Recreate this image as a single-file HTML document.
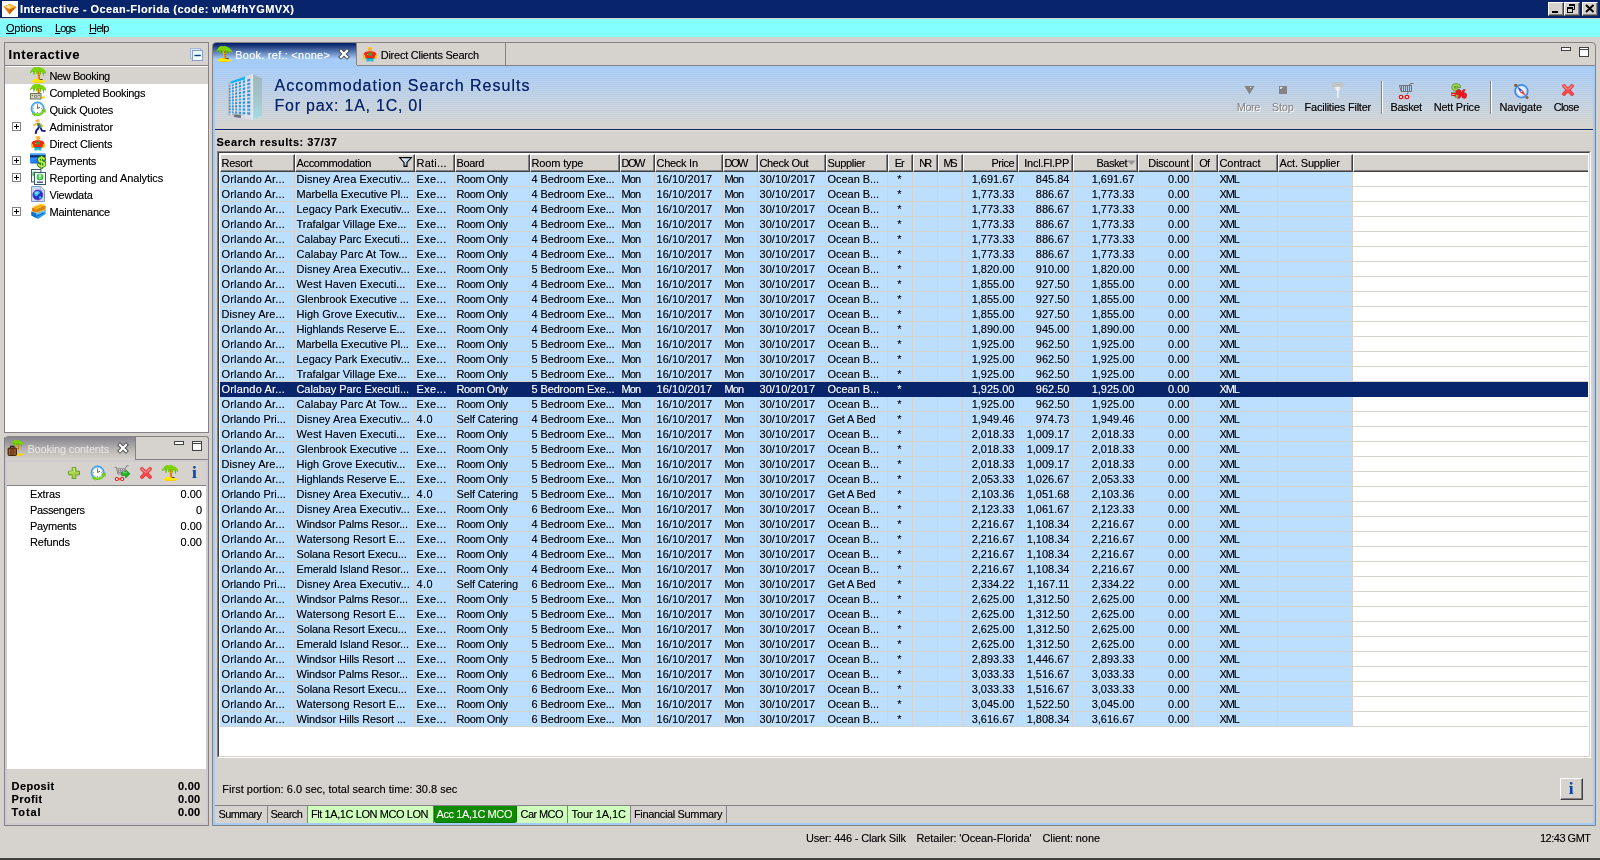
<!DOCTYPE html><html><head><meta charset="utf-8"><title>Interactive</title><style>
html,body{margin:0;padding:0;}
body{will-change:transform;width:1600px;height:860px;position:relative;overflow:hidden;background:#d6d3ce;font-family:"Liberation Sans", sans-serif;font-size:11px;color:#000000;text-shadow:0 0 0 rgba(0,0,0,.4);}
.wt{color:#ffffff;text-shadow:0 0 0 rgba(255,255,255,.4);}
div,svg{position:absolute;box-sizing:border-box;}
svg{overflow:visible;}
.t{white-space:nowrap;line-height:13px;height:13px;}
u{text-decoration:underline;}
.row{left:0;width:1368px;height:15px;border-bottom:1px solid #d6d3ce;}
.c{top:0;height:14px;line-height:14px;white-space:nowrap;overflow:hidden;background:#bddfff;border-right:1px solid #d6d3ce;padding:0 2.5px 0 1.5px;}
.sel .c{background:#08246b;color:#ffffff;text-shadow:0 0 0 rgba(255,255,255,.4);border-right-color:#08246b;}
.sel{background:#08246b;border-bottom-color:#08246b;}
.h{top:1px;height:18px;line-height:14px;white-space:nowrap;overflow:hidden;padding:1px 3px 0 0.5px;border-left:1px solid #ffffff;border-top:1px solid #ffffff;border-right:1px solid #424142;border-bottom:1px solid #424142;box-shadow:inset -1px -1px 0 #848284;background:#d6d3ce;}
</style></head><body><div style="left:0px;top:0px;width:1600px;height:18px;background:#08246b"></div>
<div style="left:0px;top:18px;width:1600px;height:1px;background:#d6d3ce"></div>
<div style="left:2px;top:1px;width:16px;height:16px;background:#ffffff"></div>
<svg style="left:2px;top:1px" width="16" height="16" viewBox="0 0 16 16"><path d="M1.5 5.5L8 3L14.5 6L7.5 13.5Z" fill="#de7908"/><path d="M2 5.5L8 3.3L13.5 6L7.5 8.5Z" fill="#ffc342"/><path d="M3 5.5L7 4.2L9 6.2L6 7.3Z" fill="#ffe39c"/><path d="M7.5 8.5L13.5 6L7.5 13Z" fill="#c65d00"/></svg>
<div class="t" style="left:20px;top:3px;color:#ffffff;text-shadow:0 0 0 rgba(255,255,255,.4);letter-spacing:0.411px;font-weight:bold">Interactive - Ocean-Florida (code: wM4fhYGMVX)</div>
<div style="left:1548px;top:2px;width:16px;height:14px;background:#d6d3ce;border-left:1px solid #ffffff;border-top:1px solid #ffffff;border-right:1px solid #424142;border-bottom:1px solid #424142;box-shadow:inset -1px -1px 0 #848284;"></div>
<svg style="left:1548px;top:2px" width="16" height="14" viewBox="0 0 16 14"><rect x="4" y="9" width="6" height="2" fill="#000000"/></svg>
<div style="left:1564px;top:2px;width:16px;height:14px;background:#d6d3ce;border-left:1px solid #ffffff;border-top:1px solid #ffffff;border-right:1px solid #424142;border-bottom:1px solid #424142;box-shadow:inset -1px -1px 0 #848284;"></div>
<svg style="left:1564px;top:2px" width="16" height="14" viewBox="0 0 16 14"><path d="M5.5 2.5h5v5h-1.500" fill="none" stroke="#000000"/><rect x="5" y="2" width="6" height="2" fill="#000000"/><rect x="3.500" y="5.500" width="5" height="5" fill="none" stroke="#000000"/><rect x="3" y="5" width="6" height="2" fill="#000000"/></svg>
<div style="left:1582px;top:2px;width:16px;height:14px;background:#d6d3ce;border-left:1px solid #ffffff;border-top:1px solid #ffffff;border-right:1px solid #424142;border-bottom:1px solid #424142;box-shadow:inset -1px -1px 0 #848284;"></div>
<svg style="left:1582px;top:2px" width="16" height="14" viewBox="0 0 16 14"><path d="M4 3l7.5 7M11.5 3l-7.5 7" stroke="#000000" stroke-width="1.9"/></svg>
<div style="left:0px;top:19px;width:1600px;height:18px;background:#84ffff"></div>
<div class="t" style="left:6px;top:22px;;letter-spacing:-0.233px"><u>O</u>ptions</div>
<div class="t" style="left:55px;top:22px;;letter-spacing:-0.967px"><u>L</u>ogs</div>
<div class="t" style="left:89px;top:22px;;letter-spacing:-0.767px"><u>H</u>elp</div>
<div style="left:4px;top:42px;width:205px;height:391px;border:1px solid #848284;background:#d6d3ce"></div>
<div class="t" style="left:8.5px;top:47px;font-size:13px;line-height:16px;height:16px;letter-spacing:0.600px;font-weight:bold">Interactive</div>
<div style="left:5px;top:65px;width:203px;height:1px;background:#848284"></div>
<div style="left:5px;top:66px;width:203px;height:366px;background:#ffffff"></div>
<svg style="left:190px;top:48px" width="13" height="13" viewBox="0 0 13 13"><defs><linearGradient id="pm" x1="0" y1="0" x2="0" y2="1"><stop offset="0" stop-color="#def7ff"/><stop offset="1" stop-color="#ffffff"/></linearGradient></defs><rect x="0.5" y="0.5" width="10" height="10" fill="#d6efff" stroke="#a5b6d6"/><rect x="2.5" y="2.5" width="10" height="10" fill="url(#pm)" stroke="#8c9ec6"/><rect x="4.400" y="6.800" width="6.400" height="1.400" fill="#084173"/></svg>
<div style="left:5px;top:67px;width:203px;height:17px;background:#d6d3ce"></div>
<svg style="left:30px;top:67px" width="16" height="16" viewBox="0 0 16 16"><path d="M4 12h6.500l1 1.500H15v1.600h-1.500V16H4v-1H1v-1.500h3z" fill="#ffe700"/><path d="M4 15h9.500v1H4z" fill="#ffcf00"/><rect x="10.200" y="12" width="2.400" height="1" fill="#523000"/><path d="M7.700 3.600L8.300 7.500L8.900 13" stroke="#ffc300" stroke-width="2.300" fill="none"/><path d="M8.300 4.500L9 8L9.500 13" stroke="#e77900" stroke-width="1" fill="none"/><path d="M8 6.200h1.600M8.300 8.600h1.500M8.400 10.800h1.500" stroke="#bd4900" stroke-width=".9"/><path d="M3 1L5 0L7 .6L8 0H9.500L11 1L13 1.600L15 3.500L16.300 5.500L16 6.800L15 6.500L14.200 5L14 8.500L13.200 9L12.800 6.500L12 5L11 5.500V7.500L10 8L9.800 5L8.500 4.500L7.500 5L7.200 7L6.200 7.200V4.500H5L4.500 7.500L3.500 8.200L3.200 5L2 4.500L1 6H0L.2 5L1.500 3Z" fill="#63c300"/><path d="M3.500 1.800L5.200 .8L7 1.400L8.200 .8L9.400 .8L10.800 1.800L12.600 2.400L14.400 4L15.400 5.600M2 3.600L4 2.800L6 3.200L9 3L11.500 3.600L13.400 4.600" stroke="#94e300" stroke-width="1" fill="none"/></svg>
<div class="t" style="left:49.5px;top:70px;;letter-spacing:-0.410px">New Booking</div>
<svg style="left:30px;top:84px" width="16" height="16" viewBox="0 0 16 16"><path d="M10 12.500h5.500l-1.500 2h-4z" fill="#ffcf00"/><path d="M7.700 3.600L8.300 7.500L8.900 13" stroke="#ffc300" stroke-width="2.300" fill="none"/><path d="M8.300 4.500L9 8L9.500 13" stroke="#e77900" stroke-width="1" fill="none"/><path d="M8 6.200h1.600M8.300 8.600h1.500M8.400 10.800h1.500" stroke="#bd4900" stroke-width=".9"/><path d="M3 1L5 0L7 .6L8 0H9.500L11 1L13 1.600L15 3.500L16.300 5.500L16 6.800L15 6.500L14.200 5L14 8.500L13.200 9L12.800 6.500L12 5L11 5.500V7.500L10 8L9.800 5L8.500 4.500L7.500 5L7.200 7L6.200 7.200V4.500H5L4.500 7.500L3.500 8.200L3.200 5L2 4.500L1 6H0L.2 5L1.500 3Z" fill="#63c300"/><path d="M3.500 1.800L5.200 .8L7 1.400L8.200 .8L9.400 .8L10.800 1.800L12.600 2.400L14.400 4L15.400 5.600M2 3.600L4 2.800L6 3.200L9 3L11.500 3.600L13.400 4.600" stroke="#94e300" stroke-width="1" fill="none"/><rect x="0.5" y="9.500" width="10.500" height="5.500" fill="#cecfbd" stroke="#73755a"/><circle cx="5.700" cy="12.300" r="1.700" fill="#8c8e7b"/><circle cx="5.700" cy="12.300" r=".7" fill="#dedfce"/><rect x="1.800" y="11" width="1.400" height="1" fill="#73755a"/><rect x="8.200" y="11" width="1.600" height="1" fill="#73755a"/></svg>
<div class="t" style="left:49.5px;top:87px;;letter-spacing:-0.329px">Completed Bookings</div>
<svg style="left:30px;top:101px" width="16" height="16" viewBox="0 0 16 16"><circle cx="7.6" cy="7.6" r="7" fill="#299eff"/><circle cx="7.6" cy="7.6" r="6" fill="#5abaff"/><circle cx="7.6" cy="7.4" r="5" fill="#ffffff" stroke="#b5bac6" stroke-width=".7"/><path d="M7.6 4.2V7.6L10 6.2" stroke="#525152" stroke-width=".9" fill="none"/><g fill="#737173"><rect x="7.2" y="3" width=".8" height=".8"/><rect x="7.2" y="11" width=".8" height=".8"/><rect x="3.2" y="7" width=".8" height=".8"/><rect x="11.2" y="7" width=".8" height=".8"/></g><path d="M4.2 11.2C6 13.6 10.4 13.4 12.6 10L11 9.2L15.6 7.4L15.8 12L14.4 11C12 15 7 16.4 4.6 13.4L6 16L1.6 13Z" fill="#6bcb18"/><path d="M5 12C7 14 10.6 13.6 12.8 10.6" stroke="#a5f342" stroke-width=".8" fill="none"/></svg>
<div class="t" style="left:49.5px;top:104px;;letter-spacing:-0.255px">Quick Quotes</div>
<svg style="left:30px;top:118px" width="16" height="16" viewBox="0 0 16 16"><path d="M7 0.8l3 1.2-1.2 1z" fill="#f7a200"/><circle cx="8" cy="3" r="1.7" fill="#ffba6b"/><path d="M5.4 2.6l2 .2" stroke="#f7a200" stroke-width="1.2"/><path d="M7 5L10.4 5.6L11.6 9.4L8 10.4Z" fill="#2949ad"/><path d="M8.6 5.2L10.8 9.4" stroke="#39aa39" stroke-width="1.6"/><path d="M10.4 6L13 8.6" stroke="#f7b221" stroke-width="1.6"/><path d="M7 5.6L4.2 7.2L3.2 7" stroke="#f7b221" stroke-width="1.5" fill="none"/><path d="M8.6 10L6.4 12.4L5.6 15.8" stroke="#181884" stroke-width="2" fill="none"/><path d="M10.6 9.8L12 12.6L15.6 13.2" stroke="#181884" stroke-width="1.8" fill="none"/></svg>
<div class="t" style="left:49.5px;top:121px;;letter-spacing:-0.100px">Administrator</div>
<div style="left:12px;top:122px;width:9px;height:9px;border:1px solid #848284;background:#ffffff"></div>
<div style="left:14px;top:126px;width:5px;height:1px;background:#000000"></div>
<div style="left:16px;top:124px;width:1px;height:5px;background:#000000"></div>
<svg style="left:30px;top:135px" width="16" height="16" viewBox="0 0 16 16"><ellipse cx="8" cy="2.2" rx="2.6" ry="1.2" fill="#ffd321"/><circle cx="8" cy="3.4" r="2" fill="#ffb242"/><path d="M1.6 9.4C1.4 6 4 5.2 8 5.2S14.6 6 14.4 9.4L13.4 12.6H2.6Z" fill="#f72810"/><path d="M1.4 8.4c-.8 1.8-.2 4 .8 5l1.4-.8-.8-3.6z M14.6 8.4c.8 1.8.2 4-.8 5l-1.4-.8.8-3.6z" fill="#ffc310"/><rect x="6.4" y="6.6" width="3.6" height="3" fill="#29aa39"/><rect x="5" y="8" width="1.2" height="1" fill="#ffd321"/><path d="M4.2 12.2h7.6l-.4 3.4h-2.8L8 14l-.6 1.6H4.6z" fill="#21bace"/><rect x="5.2" y="12" width="5.6" height="1" fill="#108a9c"/></svg>
<div class="t" style="left:49.5px;top:138px;;letter-spacing:-0.192px">Direct Clients</div>
<svg style="left:30px;top:152px" width="16" height="16" viewBox="0 0 16 16"><rect x="0" y="1" width="15.5" height="10.5" rx="1.2" fill="#318af7"/><rect x="0" y="1" width="15.5" height="1.4" rx=".6" fill="#73baff"/><rect x="0" y="3.2" width="15.5" height="2.2" fill="#083073"/><path d="M0 11.5L9 5.4H15.5V10.3a1.2 1.2 0 0 1-1.2 1.2Z" fill="#1869d6" opacity=".55"/><text x="11.6" y="15.3" font-family="Liberation Sans" font-weight="bold" font-size="14.5" text-anchor="middle" fill="#398e10" stroke="#398e10" stroke-width="1.6">$</text><text x="11.6" y="15.3" font-family="Liberation Sans" font-weight="bold" font-size="14.5" text-anchor="middle" fill="#bdf352">$</text></svg>
<div class="t" style="left:49.5px;top:155px;;letter-spacing:-0.300px">Payments</div>
<div style="left:12px;top:156px;width:9px;height:9px;border:1px solid #848284;background:#ffffff"></div>
<div style="left:14px;top:160px;width:5px;height:1px;background:#000000"></div>
<div style="left:16px;top:158px;width:1px;height:5px;background:#000000"></div>
<svg style="left:30px;top:169px" width="16" height="16" viewBox="0 0 16 16"><rect x="1.5" y="0.5" width="9.4" height="12.4" fill="#eff7f7" stroke="#39596b"/><circle cx="4.4" cy="5" r="2.4" fill="#5acb5a"/><rect x="4.5" y="3.5" width="11" height="12" fill="#f7fbff" stroke="#39596b"/><circle cx="10" cy="8" r="3.3" fill="#21b221"/><circle cx="10" cy="7.6" r="2.6" fill="#52db52"/><rect x="9.4" y="5.4" width="1.2" height="3" fill="#ffffff"/><rect x="9.4" y="9" width="1.2" height="1.1" fill="#ffffff"/><rect x="7" y="12.6" width="6" height="1.2" fill="#213842"/></svg>
<div class="t" style="left:49.5px;top:172px;;letter-spacing:-0.082px">Reporting and Analytics</div>
<div style="left:12px;top:173px;width:9px;height:9px;border:1px solid #848284;background:#ffffff"></div>
<div style="left:14px;top:177px;width:5px;height:1px;background:#000000"></div>
<div style="left:16px;top:175px;width:1px;height:5px;background:#000000"></div>
<svg style="left:30px;top:186px" width="16" height="16" viewBox="0 0 16 16"><path d="M1.5 0.5h9.2l3.8 3.8v11.2h-13z" fill="#cedbf7" stroke="#849ac6"/><path d="M10.7 0.5v3.8h3.8z" fill="#f7fbff" stroke="#849ac6" stroke-width=".7"/><circle cx="7.8" cy="9" r="5" fill="#2930ce"/><circle cx="7.8" cy="9" r="5" fill="none" stroke="#6338c6" stroke-width=".8"/><path d="M4.4 8c.8-3 3.8-3.6 5-2.4s.4 2.2-.8 2.6-1 2.4-2.2 2-2.2-.8-2-2.2z" fill="#29cbde"/><path d="M9.4 10.4c1.2-.6 2.4 0 2 1.2s-1.6 1.6-2.2.8 0-1.800.2-2z" fill="#29cbde"/><ellipse cx="6.2" cy="6.8" rx="1.8" ry="1.2" fill="#b5dbff" opacity=".75"/></svg>
<div class="t" style="left:49.5px;top:189px;;letter-spacing:-0.229px">Viewdata</div>
<svg style="left:30px;top:203px" width="16" height="16" viewBox="0 0 16 16"><path d="M2.4 3.6L11.4 0.4L15.6 2L6.4 5.6Z" fill="#ffd339"/><path d="M2 5.2L11 2L15.6 3.6L6.4 7.2Z" fill="#f7a210"/><path d="M2 6.800L11 3.6L15.6 5.200L6.4 8.800Z" fill="#ffcb31"/><path d="M2 4.400L6.4 6.200V10L2 8.200Z" fill="#de8200"/><path d="M6.400 6.400L15.600 2.800V7L6.400 10.600Z" fill="#ef9a10" opacity=".9"/><path d="M6.4 6.800l9.200-3.600M6.400 8.400l9.200-3.600" stroke="#ad6100" stroke-width=".7"/><path d="M1.400 8.400L6.400 10.600L15.600 7V11L8 16L1.400 12.400Z" fill="#299aef"/><path d="M1.400 8.400L6.400 10.600V15L1.400 12.400Z" fill="#1071c6"/><path d="M6.400 10.600L15.600 7V8.400L6.400 12Z" fill="#6bcbff"/><path d="M6.4 13.4L13.6 10" stroke="#0859a5" stroke-width=".8"/></svg>
<div class="t" style="left:49.5px;top:206px;;letter-spacing:-0.230px">Maintenance</div>
<div style="left:12px;top:207px;width:9px;height:9px;border:1px solid #848284;background:#ffffff"></div>
<div style="left:14px;top:211px;width:5px;height:1px;background:#000000"></div>
<div style="left:16px;top:209px;width:1px;height:5px;background:#000000"></div>
<div style="left:4px;top:437px;width:205px;height:389px;border:1px solid #848284;background:#d6d3ce;border-top:none;border-right:none"></div>
<div style="left:208px;top:441px;width:1px;height:385px;background:#848284"></div>
<div style="left:135px;top:459px;width:74px;height:1px;background:#848284"></div>
<div style="left:130px;top:436px;width:79px;height:7px;border-top:1px solid #848284;border-right:1px solid #848284;border-radius:0 3px 0 0"></div>
<div style="left:5px;top:460px;width:203px;height:365px;border:2px solid #cecbce"></div>
<div style="left:4px;top:436px;width:132px;height:24px;background:linear-gradient(#848284 0%,#8c8a94 12%,#bdbab5 62%,#d6d3ce 100%);border-radius:5px 0 0 0;border-right:1px solid #848284;border-left:1px solid #848284"></div>
<svg style="left:7px;top:440px" width="16" height="16" viewBox="0 0 16 16"><g transform="translate(4,0) scale(.78)"><path d="M7.700 3.600L8.300 7.500L8.900 13" stroke="#ffc300" stroke-width="2.300" fill="none"/><path d="M8.300 4.500L9 8L9.500 13" stroke="#e77900" stroke-width="1" fill="none"/><path d="M8 6.200h1.600M8.300 8.600h1.500M8.400 10.800h1.500" stroke="#bd4900" stroke-width=".9"/><path d="M3 1L5 0L7 .6L8 0H9.500L11 1L13 1.600L15 3.500L16.300 5.500L16 6.800L15 6.500L14.200 5L14 8.500L13.200 9L12.800 6.500L12 5L11 5.500V7.500L10 8L9.800 5L8.500 4.500L7.500 5L7.200 7L6.200 7.200V4.500H5L4.500 7.500L3.500 8.200L3.200 5L2 4.500L1 6H0L.2 5L1.500 3Z" fill="#63c300"/><path d="M3.500 1.800L5.200 .8L7 1.400L8.200 .8L9.400 .8L10.800 1.800L12.600 2.400L14.400 4L15.400 5.600M2 3.600L4 2.800L6 3.200L9 3L11.500 3.600L13.400 4.600" stroke="#94e300" stroke-width="1" fill="none"/></g><path d="M9 13.500h7.500v1.200l-2 1h-5.500z" fill="#ffd300"/><rect x="1" y="8" width="8.500" height="7.500" rx="1" fill="#7b4521" stroke="#391c08" stroke-width=".9"/><path d="M3.600 8v-1.600h3.400V8" fill="none" stroke="#391c08" stroke-width="1.100"/><path d="M2.500 9v6M8 9v6" stroke="#ad6939" stroke-width=".8"/></svg>
<div class="t" style="left:27.4px;top:442.6px;color:#e7e7e7;text-shadow:none;letter-spacing:-0.173px">Booking contents</div>
<svg style="left:117.5px;top:443px" width="10" height="10" viewBox="0 0 10 10"><path d="M2 2l6 6M8 2l-6 6" stroke="#424142" stroke-width="4" stroke-linecap="square"/><path d="M2 2l6 6M8 2l-6 6" stroke="#ffffff" stroke-width="2.300" stroke-linecap="square"/></svg>
<svg style="left:174px;top:441px" width="10" height="4" viewBox="0 0 10 4"><rect x="0.5" y="0.5" width="9" height="3" fill="#ffffff" stroke="#424142"/></svg>
<svg style="left:192px;top:441px" width="10" height="10" viewBox="0 0 10 10"><rect x="0.5" y="0.5" width="9" height="9" fill="#ffffff" stroke="#424142"/><rect x="0" y="2" width="10" height="1" fill="#424142"/></svg>
<div style="left:7px;top:485px;width:199px;height:1px;background:#848284"></div>
<svg style="left:66px;top:465px" width="16" height="16" viewBox="0 0 16 16"><path d="M6.200 2.500h3.600v3.700h3.700v3.600h-3.700v3.700h-3.600v-3.700h-3.700v-3.600h3.700z" fill="#a5d34a" stroke="#6b9e21" stroke-width="1"/><path d="M7 3.400h1.200v3.600M3.400 7h3.600" stroke="#d6f39c" stroke-width=".9" fill="none"/></svg>
<svg style="left:90px;top:465px" width="16" height="16" viewBox="0 0 16 16"><circle cx="7.6" cy="7.6" r="7" fill="#299eff"/><circle cx="7.6" cy="7.6" r="6" fill="#5abaff"/><circle cx="7.6" cy="7.4" r="5" fill="#ffffff" stroke="#b5bac6" stroke-width=".7"/><path d="M7.6 4.2V7.6L10 6.2" stroke="#525152" stroke-width=".9" fill="none"/><g fill="#737173"><rect x="7.2" y="3" width=".8" height=".8"/><rect x="7.2" y="11" width=".8" height=".8"/><rect x="3.2" y="7" width=".8" height=".8"/><rect x="11.2" y="7" width=".8" height=".8"/></g><path d="M4.2 11.2C6 13.6 10.4 13.4 12.6 10L11 9.2L15.6 7.4L15.8 12L14.4 11C12 15 7 16.4 4.6 13.4L6 16L1.6 13Z" fill="#6bcb18"/><path d="M5 12C7 14 10.6 13.6 12.8 10.6" stroke="#a5f342" stroke-width=".8" fill="none"/></svg>
<svg style="left:114px;top:465px" width="16" height="16" viewBox="0 0 16 16"><path d="M0.500 2.500h2l1.400 6.500h6.600" stroke="#848284" fill="none"/><path d="M2.800 3.500h8.700M3.200 5.500h7.800M3.500 7.500h7" stroke="#949294" stroke-width=".9"/><path d="M4.500 3.500v4M6.500 3.500v4M8.500 3.500v4M10.500 3.500v4" stroke="#949294"/><path d="M11.500 3.500L12.500 0.800h2" stroke="#848284" fill="none"/><circle cx="2.800" cy="14" r="1.500" fill="#ffffff" stroke="#ef1010" stroke-width="1.100"/><circle cx="8.200" cy="14" r="1.500" fill="#ffffff" stroke="#ef1010" stroke-width="1.100"/><path d="M4.400 14h2.200" stroke="#ef1010" stroke-width="1.100"/><path d="M7.500 7h4.200v-2.400l4.200 4.200l-4.200 4.200v-2.400h-4.200z" fill="#21b221" stroke="#107910" stroke-width=".6"/><path d="M8.200 7.800h4.200v-1.200" stroke="#84eb84" stroke-width=".8" fill="none"/></svg>
<svg style="left:138px;top:465px" width="16" height="16" viewBox="0 0 16 16"><path d="M4 4l8 8M12 4l-8 8" stroke="#de3031" stroke-width="3.800" stroke-linecap="round"/><path d="M4 4l8 8M12 4l-8 8" stroke="#f7494a" stroke-width="2.600" stroke-linecap="round"/><path d="M4 4l3.200 3.200M12 4l-3.200 3.200" stroke="#ff9294" stroke-width="1.200" stroke-linecap="round"/></svg>
<svg style="left:162px;top:465px" width="16" height="16" viewBox="0 0 16 16"><path d="M4 12h6.500l1 1.500H15v1.600h-1.500V16H4v-1H1v-1.500h3z" fill="#ffe700"/><path d="M4 15h9.500v1H4z" fill="#ffcf00"/><rect x="10.200" y="12" width="2.400" height="1" fill="#523000"/><path d="M7.700 3.600L8.300 7.500L8.900 13" stroke="#ffc300" stroke-width="2.300" fill="none"/><path d="M8.300 4.500L9 8L9.500 13" stroke="#e77900" stroke-width="1" fill="none"/><path d="M8 6.200h1.600M8.300 8.600h1.500M8.400 10.800h1.500" stroke="#bd4900" stroke-width=".9"/><path d="M3 1L5 0L7 .6L8 0H9.500L11 1L13 1.600L15 3.500L16.300 5.500L16 6.800L15 6.500L14.200 5L14 8.500L13.200 9L12.800 6.500L12 5L11 5.500V7.500L10 8L9.800 5L8.500 4.500L7.500 5L7.200 7L6.200 7.200V4.500H5L4.500 7.500L3.500 8.200L3.200 5L2 4.500L1 6H0L.2 5L1.500 3Z" fill="#63c300"/><path d="M3.500 1.800L5.200 .8L7 1.400L8.200 .8L9.400 .8L10.800 1.800L12.600 2.400L14.400 4L15.400 5.600M2 3.600L4 2.800L6 3.200L9 3L11.500 3.600L13.400 4.600" stroke="#94e300" stroke-width="1" fill="none"/></svg>
<div class="t" style="left:192px;top:463.7px;font-family:&quot;Liberation Serif&quot;,serif;font-weight:bold;font-size:17px;color:#0849ad;line-height:18px;height:18px">i</div>
<div style="left:7px;top:486px;width:199px;height:283px;background:#ffffff"></div>
<div class="t" style="left:30px;top:488px;;letter-spacing:-0.140px">Extras</div>
<div class="t" style="left:150px;top:488px;width:52px;text-align:right">0.00</div>
<div class="t" style="left:30px;top:504px;;letter-spacing:-0.344px">Passengers</div>
<div class="t" style="left:150px;top:504px;width:52px;text-align:right">0</div>
<div class="t" style="left:30px;top:520px;;letter-spacing:-0.300px">Payments</div>
<div class="t" style="left:150px;top:520px;width:52px;text-align:right">0.00</div>
<div class="t" style="left:30px;top:536px;;letter-spacing:-0.167px">Refunds</div>
<div class="t" style="left:150px;top:536px;width:52px;text-align:right">0.00</div>
<div class="t" style="left:11.6px;top:780px;;letter-spacing:0.367px;font-weight:bold">Deposit</div>
<div class="t" style="left:150px;top:780px;width:50.5px;text-align:right;letter-spacing:0.3px;font-weight:bold">0.00</div>
<div class="t" style="left:11.6px;top:793px;;letter-spacing:0.360px;font-weight:bold">Profit</div>
<div class="t" style="left:150px;top:793px;width:50.5px;text-align:right;letter-spacing:0.3px;font-weight:bold">0.00</div>
<div class="t" style="left:11.6px;top:806px;;letter-spacing:0.875px;font-weight:bold">Total</div>
<div class="t" style="left:150px;top:806px;width:50.5px;text-align:right;letter-spacing:0.3px;font-weight:bold">0.00</div>
<div style="left:212px;top:42px;width:1384px;height:784px;border:1px solid #848284;border-radius:4px 4px 0 0;background:#d6d3ce"></div>
<div style="left:213px;top:65px;width:1382px;height:760px;border:2px solid #a5cbf7;border-top:none"></div>
<div style="left:357px;top:65px;width:1238px;height:1px;background:#848284"></div>
<div style="left:213px;top:43px;width:144px;height:23px;background:linear-gradient(#08246b 0px,#08246b 1px,#a5cbf7 16px,#a5cbf7 23px);border-radius:3px 2px 0 0"></div>
<div style="left:356px;top:43px;width:1px;height:22px;background:#848284"></div>
<svg style="left:216px;top:46px" width="16" height="16" viewBox="0 0 16 16"><path d="M4 12h6.500l1 1.500H15v1.600h-1.500V16H4v-1H1v-1.500h3z" fill="#ffe700"/><path d="M4 15h9.500v1H4z" fill="#ffcf00"/><rect x="10.200" y="12" width="2.400" height="1" fill="#523000"/><path d="M7.700 3.600L8.300 7.500L8.900 13" stroke="#ffc300" stroke-width="2.300" fill="none"/><path d="M8.300 4.500L9 8L9.500 13" stroke="#e77900" stroke-width="1" fill="none"/><path d="M8 6.200h1.600M8.300 8.600h1.500M8.400 10.800h1.500" stroke="#bd4900" stroke-width=".9"/><path d="M3 1L5 0L7 .6L8 0H9.500L11 1L13 1.600L15 3.500L16.300 5.500L16 6.800L15 6.500L14.200 5L14 8.500L13.200 9L12.800 6.500L12 5L11 5.500V7.500L10 8L9.800 5L8.500 4.500L7.500 5L7.200 7L6.200 7.200V4.500H5L4.500 7.500L3.500 8.200L3.200 5L2 4.500L1 6H0L.2 5L1.500 3Z" fill="#63c300"/><path d="M3.500 1.800L5.200 .8L7 1.400L8.200 .8L9.400 .8L10.800 1.800L12.600 2.400L14.400 4L15.400 5.600M2 3.600L4 2.800L6 3.200L9 3L11.500 3.600L13.400 4.600" stroke="#94e300" stroke-width="1" fill="none"/></svg>
<div class="t" style="left:235.2px;top:48.7px;color:#ffffff;text-shadow:0 0 0 rgba(255,255,255,.4);letter-spacing:0.247px">Book. ref.: &lt;none&gt;</div>
<svg style="left:339px;top:49px" width="10" height="10" viewBox="0 0 10 10"><path d="M2 2l6 6M8 2l-6 6" stroke="#424142" stroke-width="4" stroke-linecap="square"/><path d="M2 2l6 6M8 2l-6 6" stroke="#ffffff" stroke-width="2.300" stroke-linecap="square"/></svg>
<div style="left:505px;top:43px;width:1px;height:22px;background:#848284"></div>
<svg style="left:362px;top:46px" width="16" height="16" viewBox="0 0 16 16"><ellipse cx="8" cy="2.2" rx="2.6" ry="1.2" fill="#ffd321"/><circle cx="8" cy="3.4" r="2" fill="#ffb242"/><path d="M1.6 9.4C1.4 6 4 5.2 8 5.2S14.6 6 14.4 9.4L13.4 12.6H2.6Z" fill="#f72810"/><path d="M1.4 8.4c-.8 1.8-.2 4 .8 5l1.4-.8-.8-3.6z M14.6 8.4c.8 1.8.2 4-.8 5l-1.4-.8.8-3.6z" fill="#ffc310"/><rect x="6.4" y="6.6" width="3.6" height="3" fill="#29aa39"/><rect x="5" y="8" width="1.2" height="1" fill="#ffd321"/><path d="M4.2 12.2h7.6l-.4 3.4h-2.8L8 14l-.6 1.6H4.6z" fill="#21bace"/><rect x="5.2" y="12" width="5.6" height="1" fill="#108a9c"/></svg>
<div class="t" style="left:380.7px;top:48.7px;;letter-spacing:-0.245px">Direct Clients Search</div>
<svg style="left:1561px;top:47px" width="10" height="4" viewBox="0 0 10 4"><rect x="0.5" y="0.5" width="9" height="3" fill="#ffffff" stroke="#424142"/></svg>
<svg style="left:1579px;top:47px" width="10" height="10" viewBox="0 0 10 10"><rect x="0.5" y="0.5" width="9" height="9" fill="#ffffff" stroke="#424142"/><rect x="0" y="2" width="10" height="1" fill="#424142"/></svg>
<div style="left:213px;top:66px;width:1382px;height:63px;background:linear-gradient(#a5cbf7 0%,#d6d3ce 100%)"></div>
<div style="left:215px;top:68px;width:1378px;height:61px;background:repeating-linear-gradient(rgba(255,255,255,0) 0px,rgba(255,255,255,0) 1px,rgba(255,255,255,.08) 1px,rgba(255,255,255,.08) 2px)"></div>
<div style="left:213px;top:66px;width:2px;height:759px;background:#a5cbf7"></div>
<div style="left:1593px;top:66px;width:2px;height:759px;background:#a5cbf7"></div>
<div style="left:215px;top:129px;width:1378px;height:1px;background:#08246b"></div>
<div style="left:215px;top:130px;width:1378px;height:1px;background:#e7dfd6"></div>
<svg style="left:226px;top:73px" width="38" height="48" viewBox="0 0 38 48"><defs><linearGradient id="hs" x1="0" y1="0" x2="0" y2="1"><stop offset="0" stop-color="#9cb6bd"/><stop offset=".6" stop-color="#a5c7ce"/><stop offset="1" stop-color="#a5dfe7"/></linearGradient><linearGradient id="hf" x1="0" y1="0" x2="1" y2="0"><stop offset="0" stop-color="#b5bece"/><stop offset=".5" stop-color="#ced7de"/><stop offset="1" stop-color="#dedfe7"/></linearGradient></defs><path d="M2 9.200L26.500 1V47L2 42.500Z" fill="url(#hf)"/><path d="M26.500 1L36 5.500V43L26.500 47Z" fill="url(#hs)"/><path d="M26.500 1V47" stroke="#deebef" stroke-width="1.200"/><path d="M4.500 8.600L19 3.600V6.400L4.500 10.800Z" fill="#18b2f7"/><path d="M2.95 12.41L4.65 11.99L4.65 13.68L2.95 14.09Z" fill="#39a6ef"/><path d="M2.95 15.27L4.65 14.93L4.65 16.61L2.95 16.96Z" fill="#298ee7"/><path d="M2.95 18.14L4.65 17.86L4.65 19.54L2.95 19.82Z" fill="#298ee7"/><path d="M2.95 21.01L4.65 20.79L4.65 22.47L2.95 22.69Z" fill="#39a6ef"/><path d="M2.95 23.88L4.65 23.72L4.65 25.40L2.95 25.56Z" fill="#298ee7"/><path d="M2.95 26.75L4.65 26.65L4.65 28.33L2.95 28.43Z" fill="#298ee7"/><path d="M2.95 29.62L4.65 29.58L4.65 31.27L2.95 31.30Z" fill="#39a6ef"/><path d="M2.95 32.48L4.65 32.52L4.65 34.20L2.95 34.17Z" fill="#298ee7"/><path d="M2.95 35.35L4.65 35.45L4.65 37.13L2.95 37.03Z" fill="#298ee7"/><path d="M2.95 38.22L4.65 38.38L4.65 40.06L2.95 39.90Z" fill="#39a6ef"/><path d="M5.85 11.47L7.75 10.99L7.75 12.75L5.85 13.23Z" fill="#39a6ef"/><path d="M5.85 14.46L7.75 14.05L7.75 15.81L5.85 16.22Z" fill="#298ee7"/><path d="M5.85 17.45L7.75 17.12L7.75 18.87L5.85 19.21Z" fill="#298ee7"/><path d="M5.85 20.44L7.75 20.18L7.75 21.94L5.85 22.20Z" fill="#39a6ef"/><path d="M5.85 23.43L7.75 23.25L7.75 25.00L5.85 25.19Z" fill="#298ee7"/><path d="M5.85 26.42L7.75 26.31L7.75 28.07L5.85 28.18Z" fill="#298ee7"/><path d="M5.85 29.41L7.75 29.37L7.75 31.13L5.85 31.17Z" fill="#39a6ef"/><path d="M5.85 32.40L7.75 32.44L7.75 34.19L5.85 34.16Z" fill="#298ee7"/><path d="M5.85 35.39L7.75 35.50L7.75 37.26L5.85 37.15Z" fill="#298ee7"/><path d="M5.85 38.38L7.75 38.57L7.75 40.32L5.85 40.14Z" fill="#39a6ef"/><path d="M9.15 10.42L11.25 9.85L11.25 11.69L9.15 12.26Z" fill="#298ee7"/><path d="M9.15 13.54L11.25 13.07L11.25 14.90L9.15 15.38Z" fill="#298ee7"/><path d="M9.15 16.67L11.25 16.28L11.25 18.12L9.15 18.51Z" fill="#39a6ef"/><path d="M9.15 19.80L11.25 19.49L11.25 21.33L9.15 21.64Z" fill="#298ee7"/><path d="M9.15 22.93L11.25 22.71L11.25 24.55L9.15 24.77Z" fill="#298ee7"/><path d="M9.15 26.06L11.25 25.92L11.25 27.76L9.15 27.90Z" fill="#39a6ef"/><path d="M9.15 29.18L11.25 29.13L11.25 30.97L9.15 31.02Z" fill="#298ee7"/><path d="M9.15 32.31L11.25 32.35L11.25 34.19L9.15 34.15Z" fill="#298ee7"/><path d="M9.15 35.44L11.25 35.56L11.25 37.40L9.15 37.28Z" fill="#39a6ef"/><path d="M9.15 38.57L11.25 38.78L11.25 40.62L9.15 40.41Z" fill="#298ee7"/><path d="M12.75 9.27L15.05 8.61L15.05 10.54L12.75 11.20Z" fill="#298ee7"/><path d="M12.75 12.55L15.05 11.99L15.05 13.92L12.75 14.48Z" fill="#298ee7"/><path d="M12.75 15.82L15.05 15.37L15.05 17.30L12.75 17.75Z" fill="#39a6ef"/><path d="M12.75 19.10L15.05 18.74L15.05 20.67L12.75 21.03Z" fill="#298ee7"/><path d="M12.75 22.38L15.05 22.12L15.05 24.05L12.75 24.31Z" fill="#298ee7"/><path d="M12.75 25.66L15.05 25.50L15.05 27.43L12.75 27.59Z" fill="#39a6ef"/><path d="M12.75 28.94L15.05 28.87L15.05 30.80L12.75 30.87Z" fill="#298ee7"/><path d="M12.75 32.21L15.05 32.25L15.05 34.18L12.75 34.14Z" fill="#298ee7"/><path d="M12.75 35.49L15.05 35.63L15.05 37.56L12.75 37.42Z" fill="#39a6ef"/><path d="M12.75 38.77L15.05 39.00L15.05 40.93L12.75 40.70Z" fill="#298ee7"/><path d="M16.60 8.04L19.20 7.26L19.20 9.29L16.60 10.07Z" fill="#298ee7"/><path d="M16.60 11.48L19.20 10.81L19.20 12.84L16.60 13.51Z" fill="#39a6ef"/><path d="M16.60 14.92L19.20 14.37L19.20 16.40L16.60 16.95Z" fill="#298ee7"/><path d="M16.60 18.36L19.20 17.92L19.20 19.95L16.60 20.38Z" fill="#298ee7"/><path d="M16.60 21.79L19.20 21.48L19.20 23.51L16.60 23.82Z" fill="#39a6ef"/><path d="M16.60 25.23L19.20 25.03L19.20 27.06L16.60 27.26Z" fill="#298ee7"/><path d="M16.60 28.67L19.20 28.59L19.20 30.62L16.60 30.70Z" fill="#298ee7"/><path d="M16.60 32.11L19.20 32.15L19.20 34.17L16.60 34.14Z" fill="#39a6ef"/><path d="M16.60 35.55L19.20 35.70L19.20 37.73L16.60 37.57Z" fill="#298ee7"/><path d="M16.60 38.99L19.20 39.26L19.20 41.28L16.60 41.01Z" fill="#298ee7"/><path d="M21.20 6.58L24.20 5.62L24.20 7.76L21.20 8.73Z" fill="#298ee7"/><path d="M21.20 10.21L24.20 9.39L24.20 11.54L21.20 12.36Z" fill="#298ee7"/><path d="M21.20 13.84L24.20 13.16L24.20 15.31L21.20 15.98Z" fill="#39a6ef"/><path d="M21.20 17.47L24.20 16.93L24.20 19.08L21.20 19.61Z" fill="#298ee7"/><path d="M21.20 21.10L24.20 20.70L24.20 22.85L21.20 23.24Z" fill="#298ee7"/><path d="M21.20 24.72L24.20 24.48L24.20 26.62L21.20 26.87Z" fill="#39a6ef"/><path d="M21.20 28.35L24.20 28.25L24.20 30.39L21.20 30.50Z" fill="#298ee7"/><path d="M21.20 31.98L24.20 32.02L24.20 34.16L21.20 34.13Z" fill="#298ee7"/><path d="M21.20 35.61L24.20 35.79L24.20 37.94L21.20 37.76Z" fill="#39a6ef"/><path d="M21.20 39.24L24.20 39.56L24.20 41.71L21.20 41.38Z" fill="#298ee7"/><path d="M5.3 10.5V43.0" stroke="#f7f7ff" stroke-width=".7"/><path d="M8.5 9.4V43.6" stroke="#f7f7ff" stroke-width=".7"/><path d="M12.0 8.3V44.2" stroke="#f7f7ff" stroke-width=".7"/><path d="M15.9 7.0V44.9" stroke="#f7f7ff" stroke-width=".7"/><path d="M20.2 5.6V45.7" stroke="#f7f7ff" stroke-width=".7"/><path d="M8 41.500L15 42.200V45L8 44Z" fill="#6b717b"/><path d="M6.500 41L16.500 42" stroke="#949aa5" stroke-width=".8"/></svg>
<div class="t" style="left:274.5px;top:76px;font-size:16px;line-height:20px;height:20px;color:#08246b;text-shadow:0 0 0 rgba(10,36,106,.75);letter-spacing:1.011px">Accommodation Search Results</div>
<div class="t" style="left:274.5px;top:96px;font-size:16px;line-height:20px;height:20px;color:#08246b;text-shadow:0 0 0 rgba(10,36,106,.75);letter-spacing:0.761px">For pax: 1A, 1C, 0I</div>
<svg style="left:1241px;top:82px" width="16" height="16" viewBox="0 0 16 16"><path d="M3.500 4h10l-5 8.600z" fill="#848284"/><rect x="9" y="5" width="1.300" height="1" fill="#ffffff"/></svg>
<div class="t" style="left:1236.72px;top:100.7px;color:#848284;text-shadow:1px 1px 0 #ffffff;;letter-spacing:-0.450px">More</div>
<svg style="left:1275px;top:82px" width="16" height="16" viewBox="0 0 16 16"><rect x="4" y="4" width="8" height="8" fill="#848284"/><rect x="5.300" y="5" width="1.200" height="2" fill="#ffffff"/><rect x="6.300" y="5" width="1" height="1" fill="#ffffff"/></svg>
<div class="t" style="left:1271.75px;top:100.7px;color:#848284;text-shadow:1px 1px 0 #ffffff;;letter-spacing:-0.200px">Stop</div>
<svg style="left:1330px;top:82px" width="16" height="16" viewBox="0 0 16 16"><defs><linearGradient id="fg" x1="0" y1="0" x2="1" y2="0"><stop offset="0" stop-color="#a5a6a5"/><stop offset=".45" stop-color="#f7f7f7"/><stop offset="1" stop-color="#b5b6b5"/></linearGradient></defs><path d="M2 2.400L7.200 9.600V15.800h1.600V9.600L14 2.400Z" fill="url(#fg)"/><ellipse cx="8" cy="2.600" rx="6" ry="1.700" fill="#d6d7d6" stroke="#b5b2b5" stroke-width=".7"/><ellipse cx="8" cy="2.700" rx="4" ry="1" fill="#bdbebd"/></svg>
<div class="t" style="left:1304.53px;top:100.7px;;letter-spacing:-0.222px">Facilities Filter</div>
<svg style="left:1398px;top:82px" width="16" height="16" viewBox="0 0 16 16"><path d="M1 3.500h13" stroke="#737173"/><path d="M11.500 3.500L12.200 1.500h3.300" stroke="#737173" fill="none"/><path d="M1.500 3.500L3.200 9.500h10.300V3.500" stroke="#737173" fill="none"/><path d="M3.500 4v5M5.500 4v5M7.500 4v5M9.500 4v5M11.500 4v5" stroke="#737173"/><path d="M10.500 9.500L9 12.500L8 14" stroke="#739294" fill="none"/><path d="M4.500 15h3" stroke="#848284" stroke-width="1"/><circle cx="3" cy="15" r="1.700" fill="#f7ffff" stroke="#f71010" stroke-width="1.300"/><circle cx="9" cy="15" r="1.700" fill="#f7ffff" stroke="#f71010" stroke-width="1.300"/></svg>
<div class="t" style="left:1390.5px;top:100.7px;;letter-spacing:-0.420px">Basket</div>
<svg style="left:1450px;top:82px" width="16" height="16" viewBox="0 0 16 16"><text x="6.300" y="13.600" font-family="Liberation Sans" font-weight="bold" font-size="17" text-anchor="middle" fill="#5aa218" stroke="#5aa218" stroke-width=".9">$</text><text x="6.300" y="13.600" font-family="Liberation Sans" font-weight="bold" font-size="17" text-anchor="middle" fill="#9cd35a">$</text><rect x="1.300" y="11" width="4.500" height="3" fill="#f71018"/><rect x="2.300" y="12" width="2.200" height="1" fill="#ffd3d6"/><text x="11.400" y="15.600" font-family="Liberation Sans" font-weight="bold" font-size="11.500" text-anchor="middle" fill="#f71018" stroke="#f71018" stroke-width="1.100">%</text></svg>
<div class="t" style="left:1433.78px;top:100.7px;;letter-spacing:-0.228px">Nett Price</div>
<svg style="left:1513px;top:82.8px" width="16" height="16" viewBox="0 0 16 16"><circle cx="2.800" cy="2.400" r="1.700" fill="#8c5d31"/><circle cx="14" cy="14.400" r="1.500" fill="#8c5d31"/><circle cx="8.400" cy="8.200" r="6.300" fill="#eff3ff" stroke="#398ae7" stroke-width="1.700"/><circle cx="8.400" cy="8.200" r="4.600" fill="none" stroke="#bdd7f7" stroke-width=".8"/><path d="M4.200 3.600L9.800 7.200L7.200 9.400Z" fill="#2959ce"/><path d="M12.800 13L7.200 9.400L9.800 7.200Z" fill="#ef3829"/><circle cx="8.500" cy="8.300" r=".8" fill="#ffffff"/></svg>
<div class="t" style="left:1499.5px;top:100.7px;;letter-spacing:-0.129px">Navigate</div>
<svg style="left:1559.5px;top:82px" width="16" height="16" viewBox="0 0 16 16"><path d="M4 4l8 8M12 4l-8 8" stroke="#de3031" stroke-width="3.800" stroke-linecap="round"/><path d="M4 4l8 8M12 4l-8 8" stroke="#f7494a" stroke-width="2.600" stroke-linecap="round"/><path d="M4 4l3.200 3.200M12 4l-3.200 3.200" stroke="#ff9294" stroke-width="1.200" stroke-linecap="round"/></svg>
<div class="t" style="left:1553.75px;top:100.7px;;letter-spacing:-0.650px">Close</div>
<div style="left:1381px;top:81px;width:1px;height:33px;background:#848284"></div>
<div style="left:1382px;top:81px;width:1px;height:33px;background:#ffffff"></div>
<div style="left:1490px;top:81px;width:1px;height:33px;background:#848284"></div>
<div style="left:1491px;top:81px;width:1px;height:33px;background:#ffffff"></div>
<div class="t" style="left:216.5px;top:135.6px;;letter-spacing:0.520px;font-weight:bold">Search results: 37/37</div>
<div style="left:217px;top:151px;width:1374px;height:607px;background:#ffffff;border-left:1px solid #848284;border-top:1px solid #848284;border-right:1px solid #ffffff;border-bottom:1px solid #ffffff"></div>
<div style="left:218px;top:152px;width:1372px;height:605px;border-left:1px solid #424142;border-top:1px solid #424142;border-right:1px solid #d6d3ce;border-bottom:1px solid #d6d3ce"></div>
<div style="left:220px;top:153px;width:1368px;height:603px;overflow:hidden"><div style="left:0;top:0;width:1368px;height:19px;background:#ffffff"><div class="h" style="left:0px;width:75px;text-align:left;letter-spacing:-0.280px;">Resort</div><div class="h" style="left:75px;width:120px;text-align:left;letter-spacing:-0.325px;">Accommodation<svg style="right:2px;top:2px" width="13" height="11" viewBox="0 0 13 11"><defs><linearGradient id="flg" x1="0" y1="0" x2="1" y2="1"><stop offset="0" stop-color="#ffffff"/><stop offset="1" stop-color="#8ca6de"/></linearGradient></defs><path d="M0.600 0.600h11.800l-4.400 4.900v3.900h-3v-3.900z" fill="url(#flg)" stroke="#000000" stroke-width="1.100"/></svg></div><div class="h" style="left:195px;width:40px;text-align:left;letter-spacing:0.217px;">Rati...</div><div class="h" style="left:235px;width:75px;text-align:left;letter-spacing:-0.350px;">Board</div><div class="h" style="left:310px;width:90px;text-align:left;letter-spacing:-0.150px;">Room type</div><div class="h" style="left:400px;width:35px;text-align:left;letter-spacing:-1.450px;">DOW</div><div class="h" style="left:435px;width:68px;text-align:left;letter-spacing:-0.271px;">Check In</div><div class="h" style="left:503px;width:35px;text-align:left;letter-spacing:-1.450px;">DOW</div><div class="h" style="left:538px;width:68px;text-align:left;letter-spacing:-0.375px;">Check Out</div><div class="h" style="left:606px;width:62px;text-align:left;letter-spacing:-0.343px;">Supplier</div><div class="h" style="left:668px;width:25px;text-align:center;letter-spacing:-1.000px;">Er</div><div class="h" style="left:693px;width:25px;text-align:center;letter-spacing:-2.900px;">NR</div><div class="h" style="left:718px;width:25px;text-align:center;letter-spacing:-2.500px;">MS</div><div class="h" style="left:743px;width:55px;text-align:right;letter-spacing:-0.525px;">Price</div><div class="h" style="left:798px;width:55px;text-align:right;letter-spacing:-0.233px;">Incl.Fl.PP</div><div class="h" style="left:853px;width:65px;text-align:right;letter-spacing:-0.520px;padding-right:10px;">Basket<svg style="right:1px;top:5px" width="9" height="6" viewBox="0 0 9 6"><path d="M0.5 0.5h8l-4 4.5z" fill="#949294"/></svg></div><div class="h" style="left:918px;width:55px;text-align:right;letter-spacing:-0.257px;">Discount</div><div class="h" style="left:973px;width:25px;text-align:center;letter-spacing:-0.700px;">Of</div><div class="h" style="left:998px;width:60px;text-align:left;letter-spacing:-0.086px;">Contract</div><div class="h" style="left:1058px;width:75px;text-align:left;letter-spacing:-0.158px;">Act. Supplier</div><div class="h" style="left:1133px;width:235px;border-right:none;box-shadow:inset 0 -1px 0 #848284"></div></div><div class="row" style="top:19px"><div class="c" style="left:0px;width:75px;text-align:left;letter-spacing:0.188px;">Orlando Ar...</div><div class="c" style="left:75px;width:120px;text-align:left;letter-spacing:0.045px;">Disney Area Executiv...</div><div class="c" style="left:195px;width:40px;text-align:left;letter-spacing:0.337px;">Exe...</div><div class="c" style="left:235px;width:75px;text-align:left;letter-spacing:-0.426px;">Room Only</div><div class="c" style="left:310px;width:90px;text-align:left;letter-spacing:-0.125px;">4 Bedroom Exe...</div><div class="c" style="left:400px;width:35px;text-align:left;letter-spacing:-0.845px;">Mon</div><div class="c" style="left:435px;width:68px;text-align:left;letter-spacing:0.061px;">16/10/2017</div><div class="c" style="left:503px;width:35px;text-align:left;letter-spacing:-0.845px;">Mon</div><div class="c" style="left:538px;width:68px;text-align:left;letter-spacing:0.061px;">30/10/2017</div><div class="c" style="left:606px;width:62px;text-align:left;letter-spacing:-0.040px;">Ocean B...</div><div class="c" style="left:668px;width:25px;text-align:center;">*</div><div class="c" style="left:693px;width:25px;text-align:center;"></div><div class="c" style="left:718px;width:25px;text-align:center;"></div><div class="c" style="left:743px;width:55px;text-align:right;">1,691.67</div><div class="c" style="left:798px;width:55px;text-align:right;">845.84</div><div class="c" style="left:853px;width:65px;text-align:right;">1,691.67</div><div class="c" style="left:918px;width:55px;text-align:right;">0.00</div><div class="c" style="left:973px;width:25px;text-align:center;"></div><div class="c" style="left:998px;width:60px;text-align:left;letter-spacing:-1.130px;">XML</div><div class="c" style="left:1058px;width:75px;text-align:left;"></div></div><div class="row" style="top:34px"><div class="c" style="left:0px;width:75px;text-align:left;letter-spacing:0.188px;">Orlando Ar...</div><div class="c" style="left:75px;width:120px;text-align:left;letter-spacing:-0.109px;">Marbella Executive Pl...</div><div class="c" style="left:195px;width:40px;text-align:left;letter-spacing:0.337px;">Exe...</div><div class="c" style="left:235px;width:75px;text-align:left;letter-spacing:-0.426px;">Room Only</div><div class="c" style="left:310px;width:90px;text-align:left;letter-spacing:-0.125px;">4 Bedroom Exe...</div><div class="c" style="left:400px;width:35px;text-align:left;letter-spacing:-0.845px;">Mon</div><div class="c" style="left:435px;width:68px;text-align:left;letter-spacing:0.061px;">16/10/2017</div><div class="c" style="left:503px;width:35px;text-align:left;letter-spacing:-0.845px;">Mon</div><div class="c" style="left:538px;width:68px;text-align:left;letter-spacing:0.061px;">30/10/2017</div><div class="c" style="left:606px;width:62px;text-align:left;letter-spacing:-0.040px;">Ocean B...</div><div class="c" style="left:668px;width:25px;text-align:center;">*</div><div class="c" style="left:693px;width:25px;text-align:center;"></div><div class="c" style="left:718px;width:25px;text-align:center;"></div><div class="c" style="left:743px;width:55px;text-align:right;">1,773.33</div><div class="c" style="left:798px;width:55px;text-align:right;">886.67</div><div class="c" style="left:853px;width:65px;text-align:right;">1,773.33</div><div class="c" style="left:918px;width:55px;text-align:right;">0.00</div><div class="c" style="left:973px;width:25px;text-align:center;"></div><div class="c" style="left:998px;width:60px;text-align:left;letter-spacing:-1.130px;">XML</div><div class="c" style="left:1058px;width:75px;text-align:left;"></div></div><div class="row" style="top:49px"><div class="c" style="left:0px;width:75px;text-align:left;letter-spacing:0.188px;">Orlando Ar...</div><div class="c" style="left:75px;width:120px;text-align:left;letter-spacing:-0.036px;">Legacy Park Executiv...</div><div class="c" style="left:195px;width:40px;text-align:left;letter-spacing:0.337px;">Exe...</div><div class="c" style="left:235px;width:75px;text-align:left;letter-spacing:-0.426px;">Room Only</div><div class="c" style="left:310px;width:90px;text-align:left;letter-spacing:-0.125px;">4 Bedroom Exe...</div><div class="c" style="left:400px;width:35px;text-align:left;letter-spacing:-0.845px;">Mon</div><div class="c" style="left:435px;width:68px;text-align:left;letter-spacing:0.061px;">16/10/2017</div><div class="c" style="left:503px;width:35px;text-align:left;letter-spacing:-0.845px;">Mon</div><div class="c" style="left:538px;width:68px;text-align:left;letter-spacing:0.061px;">30/10/2017</div><div class="c" style="left:606px;width:62px;text-align:left;letter-spacing:-0.040px;">Ocean B...</div><div class="c" style="left:668px;width:25px;text-align:center;">*</div><div class="c" style="left:693px;width:25px;text-align:center;"></div><div class="c" style="left:718px;width:25px;text-align:center;"></div><div class="c" style="left:743px;width:55px;text-align:right;">1,773.33</div><div class="c" style="left:798px;width:55px;text-align:right;">886.67</div><div class="c" style="left:853px;width:65px;text-align:right;">1,773.33</div><div class="c" style="left:918px;width:55px;text-align:right;">0.00</div><div class="c" style="left:973px;width:25px;text-align:center;"></div><div class="c" style="left:998px;width:60px;text-align:left;letter-spacing:-1.130px;">XML</div><div class="c" style="left:1058px;width:75px;text-align:left;"></div></div><div class="row" style="top:64px"><div class="c" style="left:0px;width:75px;text-align:left;letter-spacing:0.188px;">Orlando Ar...</div><div class="c" style="left:75px;width:120px;text-align:left;letter-spacing:-0.039px;">Trafalgar Village Exe...</div><div class="c" style="left:195px;width:40px;text-align:left;letter-spacing:0.337px;">Exe...</div><div class="c" style="left:235px;width:75px;text-align:left;letter-spacing:-0.426px;">Room Only</div><div class="c" style="left:310px;width:90px;text-align:left;letter-spacing:-0.125px;">4 Bedroom Exe...</div><div class="c" style="left:400px;width:35px;text-align:left;letter-spacing:-0.845px;">Mon</div><div class="c" style="left:435px;width:68px;text-align:left;letter-spacing:0.061px;">16/10/2017</div><div class="c" style="left:503px;width:35px;text-align:left;letter-spacing:-0.845px;">Mon</div><div class="c" style="left:538px;width:68px;text-align:left;letter-spacing:0.061px;">30/10/2017</div><div class="c" style="left:606px;width:62px;text-align:left;letter-spacing:-0.040px;">Ocean B...</div><div class="c" style="left:668px;width:25px;text-align:center;">*</div><div class="c" style="left:693px;width:25px;text-align:center;"></div><div class="c" style="left:718px;width:25px;text-align:center;"></div><div class="c" style="left:743px;width:55px;text-align:right;">1,773.33</div><div class="c" style="left:798px;width:55px;text-align:right;">886.67</div><div class="c" style="left:853px;width:65px;text-align:right;">1,773.33</div><div class="c" style="left:918px;width:55px;text-align:right;">0.00</div><div class="c" style="left:973px;width:25px;text-align:center;"></div><div class="c" style="left:998px;width:60px;text-align:left;letter-spacing:-1.130px;">XML</div><div class="c" style="left:1058px;width:75px;text-align:left;"></div></div><div class="row" style="top:79px"><div class="c" style="left:0px;width:75px;text-align:left;letter-spacing:0.188px;">Orlando Ar...</div><div class="c" style="left:75px;width:120px;text-align:left;letter-spacing:-0.086px;">Calabay Parc Executi...</div><div class="c" style="left:195px;width:40px;text-align:left;letter-spacing:0.337px;">Exe...</div><div class="c" style="left:235px;width:75px;text-align:left;letter-spacing:-0.426px;">Room Only</div><div class="c" style="left:310px;width:90px;text-align:left;letter-spacing:-0.125px;">4 Bedroom Exe...</div><div class="c" style="left:400px;width:35px;text-align:left;letter-spacing:-0.845px;">Mon</div><div class="c" style="left:435px;width:68px;text-align:left;letter-spacing:0.061px;">16/10/2017</div><div class="c" style="left:503px;width:35px;text-align:left;letter-spacing:-0.845px;">Mon</div><div class="c" style="left:538px;width:68px;text-align:left;letter-spacing:0.061px;">30/10/2017</div><div class="c" style="left:606px;width:62px;text-align:left;letter-spacing:-0.040px;">Ocean B...</div><div class="c" style="left:668px;width:25px;text-align:center;">*</div><div class="c" style="left:693px;width:25px;text-align:center;"></div><div class="c" style="left:718px;width:25px;text-align:center;"></div><div class="c" style="left:743px;width:55px;text-align:right;">1,773.33</div><div class="c" style="left:798px;width:55px;text-align:right;">886.67</div><div class="c" style="left:853px;width:65px;text-align:right;">1,773.33</div><div class="c" style="left:918px;width:55px;text-align:right;">0.00</div><div class="c" style="left:973px;width:25px;text-align:center;"></div><div class="c" style="left:998px;width:60px;text-align:left;letter-spacing:-1.130px;">XML</div><div class="c" style="left:1058px;width:75px;text-align:left;"></div></div><div class="row" style="top:94px"><div class="c" style="left:0px;width:75px;text-align:left;letter-spacing:0.188px;">Orlando Ar...</div><div class="c" style="left:75px;width:120px;text-align:left;letter-spacing:0.057px;">Calabay Parc At Tow...</div><div class="c" style="left:195px;width:40px;text-align:left;letter-spacing:0.337px;">Exe...</div><div class="c" style="left:235px;width:75px;text-align:left;letter-spacing:-0.426px;">Room Only</div><div class="c" style="left:310px;width:90px;text-align:left;letter-spacing:-0.125px;">4 Bedroom Exe...</div><div class="c" style="left:400px;width:35px;text-align:left;letter-spacing:-0.845px;">Mon</div><div class="c" style="left:435px;width:68px;text-align:left;letter-spacing:0.061px;">16/10/2017</div><div class="c" style="left:503px;width:35px;text-align:left;letter-spacing:-0.845px;">Mon</div><div class="c" style="left:538px;width:68px;text-align:left;letter-spacing:0.061px;">30/10/2017</div><div class="c" style="left:606px;width:62px;text-align:left;letter-spacing:-0.040px;">Ocean B...</div><div class="c" style="left:668px;width:25px;text-align:center;">*</div><div class="c" style="left:693px;width:25px;text-align:center;"></div><div class="c" style="left:718px;width:25px;text-align:center;"></div><div class="c" style="left:743px;width:55px;text-align:right;">1,773.33</div><div class="c" style="left:798px;width:55px;text-align:right;">886.67</div><div class="c" style="left:853px;width:65px;text-align:right;">1,773.33</div><div class="c" style="left:918px;width:55px;text-align:right;">0.00</div><div class="c" style="left:973px;width:25px;text-align:center;"></div><div class="c" style="left:998px;width:60px;text-align:left;letter-spacing:-1.130px;">XML</div><div class="c" style="left:1058px;width:75px;text-align:left;"></div></div><div class="row" style="top:109px"><div class="c" style="left:0px;width:75px;text-align:left;letter-spacing:0.188px;">Orlando Ar...</div><div class="c" style="left:75px;width:120px;text-align:left;letter-spacing:0.045px;">Disney Area Executiv...</div><div class="c" style="left:195px;width:40px;text-align:left;letter-spacing:0.337px;">Exe...</div><div class="c" style="left:235px;width:75px;text-align:left;letter-spacing:-0.426px;">Room Only</div><div class="c" style="left:310px;width:90px;text-align:left;letter-spacing:-0.125px;">5 Bedroom Exe...</div><div class="c" style="left:400px;width:35px;text-align:left;letter-spacing:-0.845px;">Mon</div><div class="c" style="left:435px;width:68px;text-align:left;letter-spacing:0.061px;">16/10/2017</div><div class="c" style="left:503px;width:35px;text-align:left;letter-spacing:-0.845px;">Mon</div><div class="c" style="left:538px;width:68px;text-align:left;letter-spacing:0.061px;">30/10/2017</div><div class="c" style="left:606px;width:62px;text-align:left;letter-spacing:-0.040px;">Ocean B...</div><div class="c" style="left:668px;width:25px;text-align:center;">*</div><div class="c" style="left:693px;width:25px;text-align:center;"></div><div class="c" style="left:718px;width:25px;text-align:center;"></div><div class="c" style="left:743px;width:55px;text-align:right;">1,820.00</div><div class="c" style="left:798px;width:55px;text-align:right;">910.00</div><div class="c" style="left:853px;width:65px;text-align:right;">1,820.00</div><div class="c" style="left:918px;width:55px;text-align:right;">0.00</div><div class="c" style="left:973px;width:25px;text-align:center;"></div><div class="c" style="left:998px;width:60px;text-align:left;letter-spacing:-1.130px;">XML</div><div class="c" style="left:1058px;width:75px;text-align:left;"></div></div><div class="row" style="top:124px"><div class="c" style="left:0px;width:75px;text-align:left;letter-spacing:0.188px;">Orlando Ar...</div><div class="c" style="left:75px;width:120px;text-align:left;letter-spacing:0.045px;">West Haven Executi...</div><div class="c" style="left:195px;width:40px;text-align:left;letter-spacing:0.337px;">Exe...</div><div class="c" style="left:235px;width:75px;text-align:left;letter-spacing:-0.426px;">Room Only</div><div class="c" style="left:310px;width:90px;text-align:left;letter-spacing:-0.125px;">4 Bedroom Exe...</div><div class="c" style="left:400px;width:35px;text-align:left;letter-spacing:-0.845px;">Mon</div><div class="c" style="left:435px;width:68px;text-align:left;letter-spacing:0.061px;">16/10/2017</div><div class="c" style="left:503px;width:35px;text-align:left;letter-spacing:-0.845px;">Mon</div><div class="c" style="left:538px;width:68px;text-align:left;letter-spacing:0.061px;">30/10/2017</div><div class="c" style="left:606px;width:62px;text-align:left;letter-spacing:-0.040px;">Ocean B...</div><div class="c" style="left:668px;width:25px;text-align:center;">*</div><div class="c" style="left:693px;width:25px;text-align:center;"></div><div class="c" style="left:718px;width:25px;text-align:center;"></div><div class="c" style="left:743px;width:55px;text-align:right;">1,855.00</div><div class="c" style="left:798px;width:55px;text-align:right;">927.50</div><div class="c" style="left:853px;width:65px;text-align:right;">1,855.00</div><div class="c" style="left:918px;width:55px;text-align:right;">0.00</div><div class="c" style="left:973px;width:25px;text-align:center;"></div><div class="c" style="left:998px;width:60px;text-align:left;letter-spacing:-1.130px;">XML</div><div class="c" style="left:1058px;width:75px;text-align:left;"></div></div><div class="row" style="top:139px"><div class="c" style="left:0px;width:75px;text-align:left;letter-spacing:0.188px;">Orlando Ar...</div><div class="c" style="left:75px;width:120px;text-align:left;letter-spacing:-0.059px;">Glenbrook Executive ...</div><div class="c" style="left:195px;width:40px;text-align:left;letter-spacing:0.337px;">Exe...</div><div class="c" style="left:235px;width:75px;text-align:left;letter-spacing:-0.426px;">Room Only</div><div class="c" style="left:310px;width:90px;text-align:left;letter-spacing:-0.125px;">4 Bedroom Exe...</div><div class="c" style="left:400px;width:35px;text-align:left;letter-spacing:-0.845px;">Mon</div><div class="c" style="left:435px;width:68px;text-align:left;letter-spacing:0.061px;">16/10/2017</div><div class="c" style="left:503px;width:35px;text-align:left;letter-spacing:-0.845px;">Mon</div><div class="c" style="left:538px;width:68px;text-align:left;letter-spacing:0.061px;">30/10/2017</div><div class="c" style="left:606px;width:62px;text-align:left;letter-spacing:-0.040px;">Ocean B...</div><div class="c" style="left:668px;width:25px;text-align:center;">*</div><div class="c" style="left:693px;width:25px;text-align:center;"></div><div class="c" style="left:718px;width:25px;text-align:center;"></div><div class="c" style="left:743px;width:55px;text-align:right;">1,855.00</div><div class="c" style="left:798px;width:55px;text-align:right;">927.50</div><div class="c" style="left:853px;width:65px;text-align:right;">1,855.00</div><div class="c" style="left:918px;width:55px;text-align:right;">0.00</div><div class="c" style="left:973px;width:25px;text-align:center;"></div><div class="c" style="left:998px;width:60px;text-align:left;letter-spacing:-1.130px;">XML</div><div class="c" style="left:1058px;width:75px;text-align:left;"></div></div><div class="row" style="top:154px"><div class="c" style="left:0px;width:75px;text-align:left;letter-spacing:0.083px;">Disney Are...</div><div class="c" style="left:75px;width:120px;text-align:left;letter-spacing:0.014px;">High Grove Executiv...</div><div class="c" style="left:195px;width:40px;text-align:left;letter-spacing:0.337px;">Exe...</div><div class="c" style="left:235px;width:75px;text-align:left;letter-spacing:-0.426px;">Room Only</div><div class="c" style="left:310px;width:90px;text-align:left;letter-spacing:-0.125px;">4 Bedroom Exe...</div><div class="c" style="left:400px;width:35px;text-align:left;letter-spacing:-0.845px;">Mon</div><div class="c" style="left:435px;width:68px;text-align:left;letter-spacing:0.061px;">16/10/2017</div><div class="c" style="left:503px;width:35px;text-align:left;letter-spacing:-0.845px;">Mon</div><div class="c" style="left:538px;width:68px;text-align:left;letter-spacing:0.061px;">30/10/2017</div><div class="c" style="left:606px;width:62px;text-align:left;letter-spacing:-0.040px;">Ocean B...</div><div class="c" style="left:668px;width:25px;text-align:center;">*</div><div class="c" style="left:693px;width:25px;text-align:center;"></div><div class="c" style="left:718px;width:25px;text-align:center;"></div><div class="c" style="left:743px;width:55px;text-align:right;">1,855.00</div><div class="c" style="left:798px;width:55px;text-align:right;">927.50</div><div class="c" style="left:853px;width:65px;text-align:right;">1,855.00</div><div class="c" style="left:918px;width:55px;text-align:right;">0.00</div><div class="c" style="left:973px;width:25px;text-align:center;"></div><div class="c" style="left:998px;width:60px;text-align:left;letter-spacing:-1.130px;">XML</div><div class="c" style="left:1058px;width:75px;text-align:left;"></div></div><div class="row" style="top:169px"><div class="c" style="left:0px;width:75px;text-align:left;letter-spacing:0.188px;">Orlando Ar...</div><div class="c" style="left:75px;width:120px;text-align:left;letter-spacing:-0.171px;">Highlands Reserve E...</div><div class="c" style="left:195px;width:40px;text-align:left;letter-spacing:0.337px;">Exe...</div><div class="c" style="left:235px;width:75px;text-align:left;letter-spacing:-0.426px;">Room Only</div><div class="c" style="left:310px;width:90px;text-align:left;letter-spacing:-0.125px;">4 Bedroom Exe...</div><div class="c" style="left:400px;width:35px;text-align:left;letter-spacing:-0.845px;">Mon</div><div class="c" style="left:435px;width:68px;text-align:left;letter-spacing:0.061px;">16/10/2017</div><div class="c" style="left:503px;width:35px;text-align:left;letter-spacing:-0.845px;">Mon</div><div class="c" style="left:538px;width:68px;text-align:left;letter-spacing:0.061px;">30/10/2017</div><div class="c" style="left:606px;width:62px;text-align:left;letter-spacing:-0.040px;">Ocean B...</div><div class="c" style="left:668px;width:25px;text-align:center;">*</div><div class="c" style="left:693px;width:25px;text-align:center;"></div><div class="c" style="left:718px;width:25px;text-align:center;"></div><div class="c" style="left:743px;width:55px;text-align:right;">1,890.00</div><div class="c" style="left:798px;width:55px;text-align:right;">945.00</div><div class="c" style="left:853px;width:65px;text-align:right;">1,890.00</div><div class="c" style="left:918px;width:55px;text-align:right;">0.00</div><div class="c" style="left:973px;width:25px;text-align:center;"></div><div class="c" style="left:998px;width:60px;text-align:left;letter-spacing:-1.130px;">XML</div><div class="c" style="left:1058px;width:75px;text-align:left;"></div></div><div class="row" style="top:184px"><div class="c" style="left:0px;width:75px;text-align:left;letter-spacing:0.188px;">Orlando Ar...</div><div class="c" style="left:75px;width:120px;text-align:left;letter-spacing:-0.109px;">Marbella Executive Pl...</div><div class="c" style="left:195px;width:40px;text-align:left;letter-spacing:0.337px;">Exe...</div><div class="c" style="left:235px;width:75px;text-align:left;letter-spacing:-0.426px;">Room Only</div><div class="c" style="left:310px;width:90px;text-align:left;letter-spacing:-0.125px;">5 Bedroom Exe...</div><div class="c" style="left:400px;width:35px;text-align:left;letter-spacing:-0.845px;">Mon</div><div class="c" style="left:435px;width:68px;text-align:left;letter-spacing:0.061px;">16/10/2017</div><div class="c" style="left:503px;width:35px;text-align:left;letter-spacing:-0.845px;">Mon</div><div class="c" style="left:538px;width:68px;text-align:left;letter-spacing:0.061px;">30/10/2017</div><div class="c" style="left:606px;width:62px;text-align:left;letter-spacing:-0.040px;">Ocean B...</div><div class="c" style="left:668px;width:25px;text-align:center;">*</div><div class="c" style="left:693px;width:25px;text-align:center;"></div><div class="c" style="left:718px;width:25px;text-align:center;"></div><div class="c" style="left:743px;width:55px;text-align:right;">1,925.00</div><div class="c" style="left:798px;width:55px;text-align:right;">962.50</div><div class="c" style="left:853px;width:65px;text-align:right;">1,925.00</div><div class="c" style="left:918px;width:55px;text-align:right;">0.00</div><div class="c" style="left:973px;width:25px;text-align:center;"></div><div class="c" style="left:998px;width:60px;text-align:left;letter-spacing:-1.130px;">XML</div><div class="c" style="left:1058px;width:75px;text-align:left;"></div></div><div class="row" style="top:199px"><div class="c" style="left:0px;width:75px;text-align:left;letter-spacing:0.188px;">Orlando Ar...</div><div class="c" style="left:75px;width:120px;text-align:left;letter-spacing:-0.036px;">Legacy Park Executiv...</div><div class="c" style="left:195px;width:40px;text-align:left;letter-spacing:0.337px;">Exe...</div><div class="c" style="left:235px;width:75px;text-align:left;letter-spacing:-0.426px;">Room Only</div><div class="c" style="left:310px;width:90px;text-align:left;letter-spacing:-0.125px;">5 Bedroom Exe...</div><div class="c" style="left:400px;width:35px;text-align:left;letter-spacing:-0.845px;">Mon</div><div class="c" style="left:435px;width:68px;text-align:left;letter-spacing:0.061px;">16/10/2017</div><div class="c" style="left:503px;width:35px;text-align:left;letter-spacing:-0.845px;">Mon</div><div class="c" style="left:538px;width:68px;text-align:left;letter-spacing:0.061px;">30/10/2017</div><div class="c" style="left:606px;width:62px;text-align:left;letter-spacing:-0.040px;">Ocean B...</div><div class="c" style="left:668px;width:25px;text-align:center;">*</div><div class="c" style="left:693px;width:25px;text-align:center;"></div><div class="c" style="left:718px;width:25px;text-align:center;"></div><div class="c" style="left:743px;width:55px;text-align:right;">1,925.00</div><div class="c" style="left:798px;width:55px;text-align:right;">962.50</div><div class="c" style="left:853px;width:65px;text-align:right;">1,925.00</div><div class="c" style="left:918px;width:55px;text-align:right;">0.00</div><div class="c" style="left:973px;width:25px;text-align:center;"></div><div class="c" style="left:998px;width:60px;text-align:left;letter-spacing:-1.130px;">XML</div><div class="c" style="left:1058px;width:75px;text-align:left;"></div></div><div class="row" style="top:214px"><div class="c" style="left:0px;width:75px;text-align:left;letter-spacing:0.188px;">Orlando Ar...</div><div class="c" style="left:75px;width:120px;text-align:left;letter-spacing:-0.039px;">Trafalgar Village Exe...</div><div class="c" style="left:195px;width:40px;text-align:left;letter-spacing:0.337px;">Exe...</div><div class="c" style="left:235px;width:75px;text-align:left;letter-spacing:-0.426px;">Room Only</div><div class="c" style="left:310px;width:90px;text-align:left;letter-spacing:-0.125px;">5 Bedroom Exe...</div><div class="c" style="left:400px;width:35px;text-align:left;letter-spacing:-0.845px;">Mon</div><div class="c" style="left:435px;width:68px;text-align:left;letter-spacing:0.061px;">16/10/2017</div><div class="c" style="left:503px;width:35px;text-align:left;letter-spacing:-0.845px;">Mon</div><div class="c" style="left:538px;width:68px;text-align:left;letter-spacing:0.061px;">30/10/2017</div><div class="c" style="left:606px;width:62px;text-align:left;letter-spacing:-0.040px;">Ocean B...</div><div class="c" style="left:668px;width:25px;text-align:center;">*</div><div class="c" style="left:693px;width:25px;text-align:center;"></div><div class="c" style="left:718px;width:25px;text-align:center;"></div><div class="c" style="left:743px;width:55px;text-align:right;">1,925.00</div><div class="c" style="left:798px;width:55px;text-align:right;">962.50</div><div class="c" style="left:853px;width:65px;text-align:right;">1,925.00</div><div class="c" style="left:918px;width:55px;text-align:right;">0.00</div><div class="c" style="left:973px;width:25px;text-align:center;"></div><div class="c" style="left:998px;width:60px;text-align:left;letter-spacing:-1.130px;">XML</div><div class="c" style="left:1058px;width:75px;text-align:left;"></div></div><div class="row sel" style="top:229px"><div class="c" style="left:0px;width:75px;text-align:left;letter-spacing:0.188px;">Orlando Ar...</div><div class="c" style="left:75px;width:120px;text-align:left;letter-spacing:-0.086px;">Calabay Parc Executi...</div><div class="c" style="left:195px;width:40px;text-align:left;letter-spacing:0.337px;">Exe...</div><div class="c" style="left:235px;width:75px;text-align:left;letter-spacing:-0.426px;">Room Only</div><div class="c" style="left:310px;width:90px;text-align:left;letter-spacing:-0.125px;">5 Bedroom Exe...</div><div class="c" style="left:400px;width:35px;text-align:left;letter-spacing:-0.845px;">Mon</div><div class="c" style="left:435px;width:68px;text-align:left;letter-spacing:0.061px;">16/10/2017</div><div class="c" style="left:503px;width:35px;text-align:left;letter-spacing:-0.845px;">Mon</div><div class="c" style="left:538px;width:68px;text-align:left;letter-spacing:0.061px;">30/10/2017</div><div class="c" style="left:606px;width:62px;text-align:left;letter-spacing:-0.040px;">Ocean B...</div><div class="c" style="left:668px;width:25px;text-align:center;">*</div><div class="c" style="left:693px;width:25px;text-align:center;"></div><div class="c" style="left:718px;width:25px;text-align:center;"></div><div class="c" style="left:743px;width:55px;text-align:right;">1,925.00</div><div class="c" style="left:798px;width:55px;text-align:right;">962.50</div><div class="c" style="left:853px;width:65px;text-align:right;">1,925.00</div><div class="c" style="left:918px;width:55px;text-align:right;">0.00</div><div class="c" style="left:973px;width:25px;text-align:center;"></div><div class="c" style="left:998px;width:60px;text-align:left;letter-spacing:-1.130px;">XML</div><div class="c" style="left:1058px;width:75px;text-align:left;"></div></div><div class="row" style="top:244px"><div class="c" style="left:0px;width:75px;text-align:left;letter-spacing:0.188px;">Orlando Ar...</div><div class="c" style="left:75px;width:120px;text-align:left;letter-spacing:0.057px;">Calabay Parc At Tow...</div><div class="c" style="left:195px;width:40px;text-align:left;letter-spacing:0.337px;">Exe...</div><div class="c" style="left:235px;width:75px;text-align:left;letter-spacing:-0.426px;">Room Only</div><div class="c" style="left:310px;width:90px;text-align:left;letter-spacing:-0.125px;">5 Bedroom Exe...</div><div class="c" style="left:400px;width:35px;text-align:left;letter-spacing:-0.845px;">Mon</div><div class="c" style="left:435px;width:68px;text-align:left;letter-spacing:0.061px;">16/10/2017</div><div class="c" style="left:503px;width:35px;text-align:left;letter-spacing:-0.845px;">Mon</div><div class="c" style="left:538px;width:68px;text-align:left;letter-spacing:0.061px;">30/10/2017</div><div class="c" style="left:606px;width:62px;text-align:left;letter-spacing:-0.040px;">Ocean B...</div><div class="c" style="left:668px;width:25px;text-align:center;">*</div><div class="c" style="left:693px;width:25px;text-align:center;"></div><div class="c" style="left:718px;width:25px;text-align:center;"></div><div class="c" style="left:743px;width:55px;text-align:right;">1,925.00</div><div class="c" style="left:798px;width:55px;text-align:right;">962.50</div><div class="c" style="left:853px;width:65px;text-align:right;">1,925.00</div><div class="c" style="left:918px;width:55px;text-align:right;">0.00</div><div class="c" style="left:973px;width:25px;text-align:center;"></div><div class="c" style="left:998px;width:60px;text-align:left;letter-spacing:-1.130px;">XML</div><div class="c" style="left:1058px;width:75px;text-align:left;"></div></div><div class="row" style="top:259px"><div class="c" style="left:0px;width:75px;text-align:left;letter-spacing:-0.038px;">Orlando Pri...</div><div class="c" style="left:75px;width:120px;text-align:left;letter-spacing:0.045px;">Disney Area Executiv...</div><div class="c" style="left:195px;width:40px;text-align:left;letter-spacing:0.459px;">4.0</div><div class="c" style="left:235px;width:75px;text-align:left;letter-spacing:-0.158px;">Self Catering</div><div class="c" style="left:310px;width:90px;text-align:left;letter-spacing:-0.125px;">4 Bedroom Exe...</div><div class="c" style="left:400px;width:35px;text-align:left;letter-spacing:-0.845px;">Mon</div><div class="c" style="left:435px;width:68px;text-align:left;letter-spacing:0.061px;">16/10/2017</div><div class="c" style="left:503px;width:35px;text-align:left;letter-spacing:-0.845px;">Mon</div><div class="c" style="left:538px;width:68px;text-align:left;letter-spacing:0.061px;">30/10/2017</div><div class="c" style="left:606px;width:62px;text-align:left;letter-spacing:-0.175px;">Get A Bed</div><div class="c" style="left:668px;width:25px;text-align:center;">*</div><div class="c" style="left:693px;width:25px;text-align:center;"></div><div class="c" style="left:718px;width:25px;text-align:center;"></div><div class="c" style="left:743px;width:55px;text-align:right;">1,949.46</div><div class="c" style="left:798px;width:55px;text-align:right;">974.73</div><div class="c" style="left:853px;width:65px;text-align:right;">1,949.46</div><div class="c" style="left:918px;width:55px;text-align:right;">0.00</div><div class="c" style="left:973px;width:25px;text-align:center;"></div><div class="c" style="left:998px;width:60px;text-align:left;letter-spacing:-1.130px;">XML</div><div class="c" style="left:1058px;width:75px;text-align:left;"></div></div><div class="row" style="top:274px"><div class="c" style="left:0px;width:75px;text-align:left;letter-spacing:0.188px;">Orlando Ar...</div><div class="c" style="left:75px;width:120px;text-align:left;letter-spacing:0.045px;">West Haven Executi...</div><div class="c" style="left:195px;width:40px;text-align:left;letter-spacing:0.337px;">Exe...</div><div class="c" style="left:235px;width:75px;text-align:left;letter-spacing:-0.426px;">Room Only</div><div class="c" style="left:310px;width:90px;text-align:left;letter-spacing:-0.125px;">5 Bedroom Exe...</div><div class="c" style="left:400px;width:35px;text-align:left;letter-spacing:-0.845px;">Mon</div><div class="c" style="left:435px;width:68px;text-align:left;letter-spacing:0.061px;">16/10/2017</div><div class="c" style="left:503px;width:35px;text-align:left;letter-spacing:-0.845px;">Mon</div><div class="c" style="left:538px;width:68px;text-align:left;letter-spacing:0.061px;">30/10/2017</div><div class="c" style="left:606px;width:62px;text-align:left;letter-spacing:-0.040px;">Ocean B...</div><div class="c" style="left:668px;width:25px;text-align:center;">*</div><div class="c" style="left:693px;width:25px;text-align:center;"></div><div class="c" style="left:718px;width:25px;text-align:center;"></div><div class="c" style="left:743px;width:55px;text-align:right;">2,018.33</div><div class="c" style="left:798px;width:55px;text-align:right;">1,009.17</div><div class="c" style="left:853px;width:65px;text-align:right;">2,018.33</div><div class="c" style="left:918px;width:55px;text-align:right;">0.00</div><div class="c" style="left:973px;width:25px;text-align:center;"></div><div class="c" style="left:998px;width:60px;text-align:left;letter-spacing:-1.130px;">XML</div><div class="c" style="left:1058px;width:75px;text-align:left;"></div></div><div class="row" style="top:289px"><div class="c" style="left:0px;width:75px;text-align:left;letter-spacing:0.188px;">Orlando Ar...</div><div class="c" style="left:75px;width:120px;text-align:left;letter-spacing:-0.059px;">Glenbrook Executive ...</div><div class="c" style="left:195px;width:40px;text-align:left;letter-spacing:0.337px;">Exe...</div><div class="c" style="left:235px;width:75px;text-align:left;letter-spacing:-0.426px;">Room Only</div><div class="c" style="left:310px;width:90px;text-align:left;letter-spacing:-0.125px;">5 Bedroom Exe...</div><div class="c" style="left:400px;width:35px;text-align:left;letter-spacing:-0.845px;">Mon</div><div class="c" style="left:435px;width:68px;text-align:left;letter-spacing:0.061px;">16/10/2017</div><div class="c" style="left:503px;width:35px;text-align:left;letter-spacing:-0.845px;">Mon</div><div class="c" style="left:538px;width:68px;text-align:left;letter-spacing:0.061px;">30/10/2017</div><div class="c" style="left:606px;width:62px;text-align:left;letter-spacing:-0.040px;">Ocean B...</div><div class="c" style="left:668px;width:25px;text-align:center;">*</div><div class="c" style="left:693px;width:25px;text-align:center;"></div><div class="c" style="left:718px;width:25px;text-align:center;"></div><div class="c" style="left:743px;width:55px;text-align:right;">2,018.33</div><div class="c" style="left:798px;width:55px;text-align:right;">1,009.17</div><div class="c" style="left:853px;width:65px;text-align:right;">2,018.33</div><div class="c" style="left:918px;width:55px;text-align:right;">0.00</div><div class="c" style="left:973px;width:25px;text-align:center;"></div><div class="c" style="left:998px;width:60px;text-align:left;letter-spacing:-1.130px;">XML</div><div class="c" style="left:1058px;width:75px;text-align:left;"></div></div><div class="row" style="top:304px"><div class="c" style="left:0px;width:75px;text-align:left;letter-spacing:0.083px;">Disney Are...</div><div class="c" style="left:75px;width:120px;text-align:left;letter-spacing:0.014px;">High Grove Executiv...</div><div class="c" style="left:195px;width:40px;text-align:left;letter-spacing:0.337px;">Exe...</div><div class="c" style="left:235px;width:75px;text-align:left;letter-spacing:-0.426px;">Room Only</div><div class="c" style="left:310px;width:90px;text-align:left;letter-spacing:-0.125px;">5 Bedroom Exe...</div><div class="c" style="left:400px;width:35px;text-align:left;letter-spacing:-0.845px;">Mon</div><div class="c" style="left:435px;width:68px;text-align:left;letter-spacing:0.061px;">16/10/2017</div><div class="c" style="left:503px;width:35px;text-align:left;letter-spacing:-0.845px;">Mon</div><div class="c" style="left:538px;width:68px;text-align:left;letter-spacing:0.061px;">30/10/2017</div><div class="c" style="left:606px;width:62px;text-align:left;letter-spacing:-0.040px;">Ocean B...</div><div class="c" style="left:668px;width:25px;text-align:center;">*</div><div class="c" style="left:693px;width:25px;text-align:center;"></div><div class="c" style="left:718px;width:25px;text-align:center;"></div><div class="c" style="left:743px;width:55px;text-align:right;">2,018.33</div><div class="c" style="left:798px;width:55px;text-align:right;">1,009.17</div><div class="c" style="left:853px;width:65px;text-align:right;">2,018.33</div><div class="c" style="left:918px;width:55px;text-align:right;">0.00</div><div class="c" style="left:973px;width:25px;text-align:center;"></div><div class="c" style="left:998px;width:60px;text-align:left;letter-spacing:-1.130px;">XML</div><div class="c" style="left:1058px;width:75px;text-align:left;"></div></div><div class="row" style="top:319px"><div class="c" style="left:0px;width:75px;text-align:left;letter-spacing:0.188px;">Orlando Ar...</div><div class="c" style="left:75px;width:120px;text-align:left;letter-spacing:-0.171px;">Highlands Reserve E...</div><div class="c" style="left:195px;width:40px;text-align:left;letter-spacing:0.337px;">Exe...</div><div class="c" style="left:235px;width:75px;text-align:left;letter-spacing:-0.426px;">Room Only</div><div class="c" style="left:310px;width:90px;text-align:left;letter-spacing:-0.125px;">5 Bedroom Exe...</div><div class="c" style="left:400px;width:35px;text-align:left;letter-spacing:-0.845px;">Mon</div><div class="c" style="left:435px;width:68px;text-align:left;letter-spacing:0.061px;">16/10/2017</div><div class="c" style="left:503px;width:35px;text-align:left;letter-spacing:-0.845px;">Mon</div><div class="c" style="left:538px;width:68px;text-align:left;letter-spacing:0.061px;">30/10/2017</div><div class="c" style="left:606px;width:62px;text-align:left;letter-spacing:-0.040px;">Ocean B...</div><div class="c" style="left:668px;width:25px;text-align:center;">*</div><div class="c" style="left:693px;width:25px;text-align:center;"></div><div class="c" style="left:718px;width:25px;text-align:center;"></div><div class="c" style="left:743px;width:55px;text-align:right;">2,053.33</div><div class="c" style="left:798px;width:55px;text-align:right;">1,026.67</div><div class="c" style="left:853px;width:65px;text-align:right;">2,053.33</div><div class="c" style="left:918px;width:55px;text-align:right;">0.00</div><div class="c" style="left:973px;width:25px;text-align:center;"></div><div class="c" style="left:998px;width:60px;text-align:left;letter-spacing:-1.130px;">XML</div><div class="c" style="left:1058px;width:75px;text-align:left;"></div></div><div class="row" style="top:334px"><div class="c" style="left:0px;width:75px;text-align:left;letter-spacing:-0.038px;">Orlando Pri...</div><div class="c" style="left:75px;width:120px;text-align:left;letter-spacing:0.045px;">Disney Area Executiv...</div><div class="c" style="left:195px;width:40px;text-align:left;letter-spacing:0.459px;">4.0</div><div class="c" style="left:235px;width:75px;text-align:left;letter-spacing:-0.158px;">Self Catering</div><div class="c" style="left:310px;width:90px;text-align:left;letter-spacing:-0.125px;">5 Bedroom Exe...</div><div class="c" style="left:400px;width:35px;text-align:left;letter-spacing:-0.845px;">Mon</div><div class="c" style="left:435px;width:68px;text-align:left;letter-spacing:0.061px;">16/10/2017</div><div class="c" style="left:503px;width:35px;text-align:left;letter-spacing:-0.845px;">Mon</div><div class="c" style="left:538px;width:68px;text-align:left;letter-spacing:0.061px;">30/10/2017</div><div class="c" style="left:606px;width:62px;text-align:left;letter-spacing:-0.175px;">Get A Bed</div><div class="c" style="left:668px;width:25px;text-align:center;">*</div><div class="c" style="left:693px;width:25px;text-align:center;"></div><div class="c" style="left:718px;width:25px;text-align:center;"></div><div class="c" style="left:743px;width:55px;text-align:right;">2,103.36</div><div class="c" style="left:798px;width:55px;text-align:right;">1,051.68</div><div class="c" style="left:853px;width:65px;text-align:right;">2,103.36</div><div class="c" style="left:918px;width:55px;text-align:right;">0.00</div><div class="c" style="left:973px;width:25px;text-align:center;"></div><div class="c" style="left:998px;width:60px;text-align:left;letter-spacing:-1.130px;">XML</div><div class="c" style="left:1058px;width:75px;text-align:left;"></div></div><div class="row" style="top:349px"><div class="c" style="left:0px;width:75px;text-align:left;letter-spacing:0.188px;">Orlando Ar...</div><div class="c" style="left:75px;width:120px;text-align:left;letter-spacing:0.045px;">Disney Area Executiv...</div><div class="c" style="left:195px;width:40px;text-align:left;letter-spacing:0.337px;">Exe...</div><div class="c" style="left:235px;width:75px;text-align:left;letter-spacing:-0.426px;">Room Only</div><div class="c" style="left:310px;width:90px;text-align:left;letter-spacing:-0.125px;">6 Bedroom Exe...</div><div class="c" style="left:400px;width:35px;text-align:left;letter-spacing:-0.845px;">Mon</div><div class="c" style="left:435px;width:68px;text-align:left;letter-spacing:0.061px;">16/10/2017</div><div class="c" style="left:503px;width:35px;text-align:left;letter-spacing:-0.845px;">Mon</div><div class="c" style="left:538px;width:68px;text-align:left;letter-spacing:0.061px;">30/10/2017</div><div class="c" style="left:606px;width:62px;text-align:left;letter-spacing:-0.040px;">Ocean B...</div><div class="c" style="left:668px;width:25px;text-align:center;">*</div><div class="c" style="left:693px;width:25px;text-align:center;"></div><div class="c" style="left:718px;width:25px;text-align:center;"></div><div class="c" style="left:743px;width:55px;text-align:right;">2,123.33</div><div class="c" style="left:798px;width:55px;text-align:right;">1,061.67</div><div class="c" style="left:853px;width:65px;text-align:right;">2,123.33</div><div class="c" style="left:918px;width:55px;text-align:right;">0.00</div><div class="c" style="left:973px;width:25px;text-align:center;"></div><div class="c" style="left:998px;width:60px;text-align:left;letter-spacing:-1.130px;">XML</div><div class="c" style="left:1058px;width:75px;text-align:left;"></div></div><div class="row" style="top:364px"><div class="c" style="left:0px;width:75px;text-align:left;letter-spacing:0.188px;">Orlando Ar...</div><div class="c" style="left:75px;width:120px;text-align:left;letter-spacing:-0.162px;">Windsor Palms Resor...</div><div class="c" style="left:195px;width:40px;text-align:left;letter-spacing:0.337px;">Exe...</div><div class="c" style="left:235px;width:75px;text-align:left;letter-spacing:-0.426px;">Room Only</div><div class="c" style="left:310px;width:90px;text-align:left;letter-spacing:-0.125px;">4 Bedroom Exe...</div><div class="c" style="left:400px;width:35px;text-align:left;letter-spacing:-0.845px;">Mon</div><div class="c" style="left:435px;width:68px;text-align:left;letter-spacing:0.061px;">16/10/2017</div><div class="c" style="left:503px;width:35px;text-align:left;letter-spacing:-0.845px;">Mon</div><div class="c" style="left:538px;width:68px;text-align:left;letter-spacing:0.061px;">30/10/2017</div><div class="c" style="left:606px;width:62px;text-align:left;letter-spacing:-0.040px;">Ocean B...</div><div class="c" style="left:668px;width:25px;text-align:center;">*</div><div class="c" style="left:693px;width:25px;text-align:center;"></div><div class="c" style="left:718px;width:25px;text-align:center;"></div><div class="c" style="left:743px;width:55px;text-align:right;">2,216.67</div><div class="c" style="left:798px;width:55px;text-align:right;">1,108.34</div><div class="c" style="left:853px;width:65px;text-align:right;">2,216.67</div><div class="c" style="left:918px;width:55px;text-align:right;">0.00</div><div class="c" style="left:973px;width:25px;text-align:center;"></div><div class="c" style="left:998px;width:60px;text-align:left;letter-spacing:-1.130px;">XML</div><div class="c" style="left:1058px;width:75px;text-align:left;"></div></div><div class="row" style="top:379px"><div class="c" style="left:0px;width:75px;text-align:left;letter-spacing:0.188px;">Orlando Ar...</div><div class="c" style="left:75px;width:120px;text-align:left;letter-spacing:0.055px;">Watersong Resort E...</div><div class="c" style="left:195px;width:40px;text-align:left;letter-spacing:0.337px;">Exe...</div><div class="c" style="left:235px;width:75px;text-align:left;letter-spacing:-0.426px;">Room Only</div><div class="c" style="left:310px;width:90px;text-align:left;letter-spacing:-0.125px;">4 Bedroom Exe...</div><div class="c" style="left:400px;width:35px;text-align:left;letter-spacing:-0.845px;">Mon</div><div class="c" style="left:435px;width:68px;text-align:left;letter-spacing:0.061px;">16/10/2017</div><div class="c" style="left:503px;width:35px;text-align:left;letter-spacing:-0.845px;">Mon</div><div class="c" style="left:538px;width:68px;text-align:left;letter-spacing:0.061px;">30/10/2017</div><div class="c" style="left:606px;width:62px;text-align:left;letter-spacing:-0.040px;">Ocean B...</div><div class="c" style="left:668px;width:25px;text-align:center;">*</div><div class="c" style="left:693px;width:25px;text-align:center;"></div><div class="c" style="left:718px;width:25px;text-align:center;"></div><div class="c" style="left:743px;width:55px;text-align:right;">2,216.67</div><div class="c" style="left:798px;width:55px;text-align:right;">1,108.34</div><div class="c" style="left:853px;width:65px;text-align:right;">2,216.67</div><div class="c" style="left:918px;width:55px;text-align:right;">0.00</div><div class="c" style="left:973px;width:25px;text-align:center;"></div><div class="c" style="left:998px;width:60px;text-align:left;letter-spacing:-1.130px;">XML</div><div class="c" style="left:1058px;width:75px;text-align:left;"></div></div><div class="row" style="top:394px"><div class="c" style="left:0px;width:75px;text-align:left;letter-spacing:0.188px;">Orlando Ar...</div><div class="c" style="left:75px;width:120px;text-align:left;letter-spacing:-0.110px;">Solana Resort Execu...</div><div class="c" style="left:195px;width:40px;text-align:left;letter-spacing:0.337px;">Exe...</div><div class="c" style="left:235px;width:75px;text-align:left;letter-spacing:-0.426px;">Room Only</div><div class="c" style="left:310px;width:90px;text-align:left;letter-spacing:-0.125px;">4 Bedroom Exe...</div><div class="c" style="left:400px;width:35px;text-align:left;letter-spacing:-0.845px;">Mon</div><div class="c" style="left:435px;width:68px;text-align:left;letter-spacing:0.061px;">16/10/2017</div><div class="c" style="left:503px;width:35px;text-align:left;letter-spacing:-0.845px;">Mon</div><div class="c" style="left:538px;width:68px;text-align:left;letter-spacing:0.061px;">30/10/2017</div><div class="c" style="left:606px;width:62px;text-align:left;letter-spacing:-0.040px;">Ocean B...</div><div class="c" style="left:668px;width:25px;text-align:center;">*</div><div class="c" style="left:693px;width:25px;text-align:center;"></div><div class="c" style="left:718px;width:25px;text-align:center;"></div><div class="c" style="left:743px;width:55px;text-align:right;">2,216.67</div><div class="c" style="left:798px;width:55px;text-align:right;">1,108.34</div><div class="c" style="left:853px;width:65px;text-align:right;">2,216.67</div><div class="c" style="left:918px;width:55px;text-align:right;">0.00</div><div class="c" style="left:973px;width:25px;text-align:center;"></div><div class="c" style="left:998px;width:60px;text-align:left;letter-spacing:-1.130px;">XML</div><div class="c" style="left:1058px;width:75px;text-align:left;"></div></div><div class="row" style="top:409px"><div class="c" style="left:0px;width:75px;text-align:left;letter-spacing:0.188px;">Orlando Ar...</div><div class="c" style="left:75px;width:120px;text-align:left;letter-spacing:-0.086px;">Emerald Island Resor...</div><div class="c" style="left:195px;width:40px;text-align:left;letter-spacing:0.337px;">Exe...</div><div class="c" style="left:235px;width:75px;text-align:left;letter-spacing:-0.426px;">Room Only</div><div class="c" style="left:310px;width:90px;text-align:left;letter-spacing:-0.125px;">4 Bedroom Exe...</div><div class="c" style="left:400px;width:35px;text-align:left;letter-spacing:-0.845px;">Mon</div><div class="c" style="left:435px;width:68px;text-align:left;letter-spacing:0.061px;">16/10/2017</div><div class="c" style="left:503px;width:35px;text-align:left;letter-spacing:-0.845px;">Mon</div><div class="c" style="left:538px;width:68px;text-align:left;letter-spacing:0.061px;">30/10/2017</div><div class="c" style="left:606px;width:62px;text-align:left;letter-spacing:-0.040px;">Ocean B...</div><div class="c" style="left:668px;width:25px;text-align:center;">*</div><div class="c" style="left:693px;width:25px;text-align:center;"></div><div class="c" style="left:718px;width:25px;text-align:center;"></div><div class="c" style="left:743px;width:55px;text-align:right;">2,216.67</div><div class="c" style="left:798px;width:55px;text-align:right;">1,108.34</div><div class="c" style="left:853px;width:65px;text-align:right;">2,216.67</div><div class="c" style="left:918px;width:55px;text-align:right;">0.00</div><div class="c" style="left:973px;width:25px;text-align:center;"></div><div class="c" style="left:998px;width:60px;text-align:left;letter-spacing:-1.130px;">XML</div><div class="c" style="left:1058px;width:75px;text-align:left;"></div></div><div class="row" style="top:424px"><div class="c" style="left:0px;width:75px;text-align:left;letter-spacing:-0.038px;">Orlando Pri...</div><div class="c" style="left:75px;width:120px;text-align:left;letter-spacing:0.045px;">Disney Area Executiv...</div><div class="c" style="left:195px;width:40px;text-align:left;letter-spacing:0.459px;">4.0</div><div class="c" style="left:235px;width:75px;text-align:left;letter-spacing:-0.158px;">Self Catering</div><div class="c" style="left:310px;width:90px;text-align:left;letter-spacing:-0.125px;">6 Bedroom Exe...</div><div class="c" style="left:400px;width:35px;text-align:left;letter-spacing:-0.845px;">Mon</div><div class="c" style="left:435px;width:68px;text-align:left;letter-spacing:0.061px;">16/10/2017</div><div class="c" style="left:503px;width:35px;text-align:left;letter-spacing:-0.845px;">Mon</div><div class="c" style="left:538px;width:68px;text-align:left;letter-spacing:0.061px;">30/10/2017</div><div class="c" style="left:606px;width:62px;text-align:left;letter-spacing:-0.175px;">Get A Bed</div><div class="c" style="left:668px;width:25px;text-align:center;">*</div><div class="c" style="left:693px;width:25px;text-align:center;"></div><div class="c" style="left:718px;width:25px;text-align:center;"></div><div class="c" style="left:743px;width:55px;text-align:right;">2,334.22</div><div class="c" style="left:798px;width:55px;text-align:right;">1,167.11</div><div class="c" style="left:853px;width:65px;text-align:right;">2,334.22</div><div class="c" style="left:918px;width:55px;text-align:right;">0.00</div><div class="c" style="left:973px;width:25px;text-align:center;"></div><div class="c" style="left:998px;width:60px;text-align:left;letter-spacing:-1.130px;">XML</div><div class="c" style="left:1058px;width:75px;text-align:left;"></div></div><div class="row" style="top:439px"><div class="c" style="left:0px;width:75px;text-align:left;letter-spacing:0.188px;">Orlando Ar...</div><div class="c" style="left:75px;width:120px;text-align:left;letter-spacing:-0.162px;">Windsor Palms Resor...</div><div class="c" style="left:195px;width:40px;text-align:left;letter-spacing:0.337px;">Exe...</div><div class="c" style="left:235px;width:75px;text-align:left;letter-spacing:-0.426px;">Room Only</div><div class="c" style="left:310px;width:90px;text-align:left;letter-spacing:-0.125px;">5 Bedroom Exe...</div><div class="c" style="left:400px;width:35px;text-align:left;letter-spacing:-0.845px;">Mon</div><div class="c" style="left:435px;width:68px;text-align:left;letter-spacing:0.061px;">16/10/2017</div><div class="c" style="left:503px;width:35px;text-align:left;letter-spacing:-0.845px;">Mon</div><div class="c" style="left:538px;width:68px;text-align:left;letter-spacing:0.061px;">30/10/2017</div><div class="c" style="left:606px;width:62px;text-align:left;letter-spacing:-0.040px;">Ocean B...</div><div class="c" style="left:668px;width:25px;text-align:center;">*</div><div class="c" style="left:693px;width:25px;text-align:center;"></div><div class="c" style="left:718px;width:25px;text-align:center;"></div><div class="c" style="left:743px;width:55px;text-align:right;">2,625.00</div><div class="c" style="left:798px;width:55px;text-align:right;">1,312.50</div><div class="c" style="left:853px;width:65px;text-align:right;">2,625.00</div><div class="c" style="left:918px;width:55px;text-align:right;">0.00</div><div class="c" style="left:973px;width:25px;text-align:center;"></div><div class="c" style="left:998px;width:60px;text-align:left;letter-spacing:-1.130px;">XML</div><div class="c" style="left:1058px;width:75px;text-align:left;"></div></div><div class="row" style="top:454px"><div class="c" style="left:0px;width:75px;text-align:left;letter-spacing:0.188px;">Orlando Ar...</div><div class="c" style="left:75px;width:120px;text-align:left;letter-spacing:0.055px;">Watersong Resort E...</div><div class="c" style="left:195px;width:40px;text-align:left;letter-spacing:0.337px;">Exe...</div><div class="c" style="left:235px;width:75px;text-align:left;letter-spacing:-0.426px;">Room Only</div><div class="c" style="left:310px;width:90px;text-align:left;letter-spacing:-0.125px;">5 Bedroom Exe...</div><div class="c" style="left:400px;width:35px;text-align:left;letter-spacing:-0.845px;">Mon</div><div class="c" style="left:435px;width:68px;text-align:left;letter-spacing:0.061px;">16/10/2017</div><div class="c" style="left:503px;width:35px;text-align:left;letter-spacing:-0.845px;">Mon</div><div class="c" style="left:538px;width:68px;text-align:left;letter-spacing:0.061px;">30/10/2017</div><div class="c" style="left:606px;width:62px;text-align:left;letter-spacing:-0.040px;">Ocean B...</div><div class="c" style="left:668px;width:25px;text-align:center;">*</div><div class="c" style="left:693px;width:25px;text-align:center;"></div><div class="c" style="left:718px;width:25px;text-align:center;"></div><div class="c" style="left:743px;width:55px;text-align:right;">2,625.00</div><div class="c" style="left:798px;width:55px;text-align:right;">1,312.50</div><div class="c" style="left:853px;width:65px;text-align:right;">2,625.00</div><div class="c" style="left:918px;width:55px;text-align:right;">0.00</div><div class="c" style="left:973px;width:25px;text-align:center;"></div><div class="c" style="left:998px;width:60px;text-align:left;letter-spacing:-1.130px;">XML</div><div class="c" style="left:1058px;width:75px;text-align:left;"></div></div><div class="row" style="top:469px"><div class="c" style="left:0px;width:75px;text-align:left;letter-spacing:0.188px;">Orlando Ar...</div><div class="c" style="left:75px;width:120px;text-align:left;letter-spacing:-0.110px;">Solana Resort Execu...</div><div class="c" style="left:195px;width:40px;text-align:left;letter-spacing:0.337px;">Exe...</div><div class="c" style="left:235px;width:75px;text-align:left;letter-spacing:-0.426px;">Room Only</div><div class="c" style="left:310px;width:90px;text-align:left;letter-spacing:-0.125px;">5 Bedroom Exe...</div><div class="c" style="left:400px;width:35px;text-align:left;letter-spacing:-0.845px;">Mon</div><div class="c" style="left:435px;width:68px;text-align:left;letter-spacing:0.061px;">16/10/2017</div><div class="c" style="left:503px;width:35px;text-align:left;letter-spacing:-0.845px;">Mon</div><div class="c" style="left:538px;width:68px;text-align:left;letter-spacing:0.061px;">30/10/2017</div><div class="c" style="left:606px;width:62px;text-align:left;letter-spacing:-0.040px;">Ocean B...</div><div class="c" style="left:668px;width:25px;text-align:center;">*</div><div class="c" style="left:693px;width:25px;text-align:center;"></div><div class="c" style="left:718px;width:25px;text-align:center;"></div><div class="c" style="left:743px;width:55px;text-align:right;">2,625.00</div><div class="c" style="left:798px;width:55px;text-align:right;">1,312.50</div><div class="c" style="left:853px;width:65px;text-align:right;">2,625.00</div><div class="c" style="left:918px;width:55px;text-align:right;">0.00</div><div class="c" style="left:973px;width:25px;text-align:center;"></div><div class="c" style="left:998px;width:60px;text-align:left;letter-spacing:-1.130px;">XML</div><div class="c" style="left:1058px;width:75px;text-align:left;"></div></div><div class="row" style="top:484px"><div class="c" style="left:0px;width:75px;text-align:left;letter-spacing:0.188px;">Orlando Ar...</div><div class="c" style="left:75px;width:120px;text-align:left;letter-spacing:-0.086px;">Emerald Island Resor...</div><div class="c" style="left:195px;width:40px;text-align:left;letter-spacing:0.337px;">Exe...</div><div class="c" style="left:235px;width:75px;text-align:left;letter-spacing:-0.426px;">Room Only</div><div class="c" style="left:310px;width:90px;text-align:left;letter-spacing:-0.125px;">5 Bedroom Exe...</div><div class="c" style="left:400px;width:35px;text-align:left;letter-spacing:-0.845px;">Mon</div><div class="c" style="left:435px;width:68px;text-align:left;letter-spacing:0.061px;">16/10/2017</div><div class="c" style="left:503px;width:35px;text-align:left;letter-spacing:-0.845px;">Mon</div><div class="c" style="left:538px;width:68px;text-align:left;letter-spacing:0.061px;">30/10/2017</div><div class="c" style="left:606px;width:62px;text-align:left;letter-spacing:-0.040px;">Ocean B...</div><div class="c" style="left:668px;width:25px;text-align:center;">*</div><div class="c" style="left:693px;width:25px;text-align:center;"></div><div class="c" style="left:718px;width:25px;text-align:center;"></div><div class="c" style="left:743px;width:55px;text-align:right;">2,625.00</div><div class="c" style="left:798px;width:55px;text-align:right;">1,312.50</div><div class="c" style="left:853px;width:65px;text-align:right;">2,625.00</div><div class="c" style="left:918px;width:55px;text-align:right;">0.00</div><div class="c" style="left:973px;width:25px;text-align:center;"></div><div class="c" style="left:998px;width:60px;text-align:left;letter-spacing:-1.130px;">XML</div><div class="c" style="left:1058px;width:75px;text-align:left;"></div></div><div class="row" style="top:499px"><div class="c" style="left:0px;width:75px;text-align:left;letter-spacing:0.188px;">Orlando Ar...</div><div class="c" style="left:75px;width:120px;text-align:left;letter-spacing:-0.109px;">Windsor Hills Resort ...</div><div class="c" style="left:195px;width:40px;text-align:left;letter-spacing:0.337px;">Exe...</div><div class="c" style="left:235px;width:75px;text-align:left;letter-spacing:-0.426px;">Room Only</div><div class="c" style="left:310px;width:90px;text-align:left;letter-spacing:-0.125px;">5 Bedroom Exe...</div><div class="c" style="left:400px;width:35px;text-align:left;letter-spacing:-0.845px;">Mon</div><div class="c" style="left:435px;width:68px;text-align:left;letter-spacing:0.061px;">16/10/2017</div><div class="c" style="left:503px;width:35px;text-align:left;letter-spacing:-0.845px;">Mon</div><div class="c" style="left:538px;width:68px;text-align:left;letter-spacing:0.061px;">30/10/2017</div><div class="c" style="left:606px;width:62px;text-align:left;letter-spacing:-0.040px;">Ocean B...</div><div class="c" style="left:668px;width:25px;text-align:center;">*</div><div class="c" style="left:693px;width:25px;text-align:center;"></div><div class="c" style="left:718px;width:25px;text-align:center;"></div><div class="c" style="left:743px;width:55px;text-align:right;">2,893.33</div><div class="c" style="left:798px;width:55px;text-align:right;">1,446.67</div><div class="c" style="left:853px;width:65px;text-align:right;">2,893.33</div><div class="c" style="left:918px;width:55px;text-align:right;">0.00</div><div class="c" style="left:973px;width:25px;text-align:center;"></div><div class="c" style="left:998px;width:60px;text-align:left;letter-spacing:-1.130px;">XML</div><div class="c" style="left:1058px;width:75px;text-align:left;"></div></div><div class="row" style="top:514px"><div class="c" style="left:0px;width:75px;text-align:left;letter-spacing:0.188px;">Orlando Ar...</div><div class="c" style="left:75px;width:120px;text-align:left;letter-spacing:-0.162px;">Windsor Palms Resor...</div><div class="c" style="left:195px;width:40px;text-align:left;letter-spacing:0.337px;">Exe...</div><div class="c" style="left:235px;width:75px;text-align:left;letter-spacing:-0.426px;">Room Only</div><div class="c" style="left:310px;width:90px;text-align:left;letter-spacing:-0.125px;">6 Bedroom Exe...</div><div class="c" style="left:400px;width:35px;text-align:left;letter-spacing:-0.845px;">Mon</div><div class="c" style="left:435px;width:68px;text-align:left;letter-spacing:0.061px;">16/10/2017</div><div class="c" style="left:503px;width:35px;text-align:left;letter-spacing:-0.845px;">Mon</div><div class="c" style="left:538px;width:68px;text-align:left;letter-spacing:0.061px;">30/10/2017</div><div class="c" style="left:606px;width:62px;text-align:left;letter-spacing:-0.040px;">Ocean B...</div><div class="c" style="left:668px;width:25px;text-align:center;">*</div><div class="c" style="left:693px;width:25px;text-align:center;"></div><div class="c" style="left:718px;width:25px;text-align:center;"></div><div class="c" style="left:743px;width:55px;text-align:right;">3,033.33</div><div class="c" style="left:798px;width:55px;text-align:right;">1,516.67</div><div class="c" style="left:853px;width:65px;text-align:right;">3,033.33</div><div class="c" style="left:918px;width:55px;text-align:right;">0.00</div><div class="c" style="left:973px;width:25px;text-align:center;"></div><div class="c" style="left:998px;width:60px;text-align:left;letter-spacing:-1.130px;">XML</div><div class="c" style="left:1058px;width:75px;text-align:left;"></div></div><div class="row" style="top:529px"><div class="c" style="left:0px;width:75px;text-align:left;letter-spacing:0.188px;">Orlando Ar...</div><div class="c" style="left:75px;width:120px;text-align:left;letter-spacing:-0.110px;">Solana Resort Execu...</div><div class="c" style="left:195px;width:40px;text-align:left;letter-spacing:0.337px;">Exe...</div><div class="c" style="left:235px;width:75px;text-align:left;letter-spacing:-0.426px;">Room Only</div><div class="c" style="left:310px;width:90px;text-align:left;letter-spacing:-0.125px;">6 Bedroom Exe...</div><div class="c" style="left:400px;width:35px;text-align:left;letter-spacing:-0.845px;">Mon</div><div class="c" style="left:435px;width:68px;text-align:left;letter-spacing:0.061px;">16/10/2017</div><div class="c" style="left:503px;width:35px;text-align:left;letter-spacing:-0.845px;">Mon</div><div class="c" style="left:538px;width:68px;text-align:left;letter-spacing:0.061px;">30/10/2017</div><div class="c" style="left:606px;width:62px;text-align:left;letter-spacing:-0.040px;">Ocean B...</div><div class="c" style="left:668px;width:25px;text-align:center;">*</div><div class="c" style="left:693px;width:25px;text-align:center;"></div><div class="c" style="left:718px;width:25px;text-align:center;"></div><div class="c" style="left:743px;width:55px;text-align:right;">3,033.33</div><div class="c" style="left:798px;width:55px;text-align:right;">1,516.67</div><div class="c" style="left:853px;width:65px;text-align:right;">3,033.33</div><div class="c" style="left:918px;width:55px;text-align:right;">0.00</div><div class="c" style="left:973px;width:25px;text-align:center;"></div><div class="c" style="left:998px;width:60px;text-align:left;letter-spacing:-1.130px;">XML</div><div class="c" style="left:1058px;width:75px;text-align:left;"></div></div><div class="row" style="top:544px"><div class="c" style="left:0px;width:75px;text-align:left;letter-spacing:0.188px;">Orlando Ar...</div><div class="c" style="left:75px;width:120px;text-align:left;letter-spacing:0.055px;">Watersong Resort E...</div><div class="c" style="left:195px;width:40px;text-align:left;letter-spacing:0.337px;">Exe...</div><div class="c" style="left:235px;width:75px;text-align:left;letter-spacing:-0.426px;">Room Only</div><div class="c" style="left:310px;width:90px;text-align:left;letter-spacing:-0.125px;">6 Bedroom Exe...</div><div class="c" style="left:400px;width:35px;text-align:left;letter-spacing:-0.845px;">Mon</div><div class="c" style="left:435px;width:68px;text-align:left;letter-spacing:0.061px;">16/10/2017</div><div class="c" style="left:503px;width:35px;text-align:left;letter-spacing:-0.845px;">Mon</div><div class="c" style="left:538px;width:68px;text-align:left;letter-spacing:0.061px;">30/10/2017</div><div class="c" style="left:606px;width:62px;text-align:left;letter-spacing:-0.040px;">Ocean B...</div><div class="c" style="left:668px;width:25px;text-align:center;">*</div><div class="c" style="left:693px;width:25px;text-align:center;"></div><div class="c" style="left:718px;width:25px;text-align:center;"></div><div class="c" style="left:743px;width:55px;text-align:right;">3,045.00</div><div class="c" style="left:798px;width:55px;text-align:right;">1,522.50</div><div class="c" style="left:853px;width:65px;text-align:right;">3,045.00</div><div class="c" style="left:918px;width:55px;text-align:right;">0.00</div><div class="c" style="left:973px;width:25px;text-align:center;"></div><div class="c" style="left:998px;width:60px;text-align:left;letter-spacing:-1.130px;">XML</div><div class="c" style="left:1058px;width:75px;text-align:left;"></div></div><div class="row" style="top:559px"><div class="c" style="left:0px;width:75px;text-align:left;letter-spacing:0.188px;">Orlando Ar...</div><div class="c" style="left:75px;width:120px;text-align:left;letter-spacing:-0.109px;">Windsor Hills Resort ...</div><div class="c" style="left:195px;width:40px;text-align:left;letter-spacing:0.337px;">Exe...</div><div class="c" style="left:235px;width:75px;text-align:left;letter-spacing:-0.426px;">Room Only</div><div class="c" style="left:310px;width:90px;text-align:left;letter-spacing:-0.125px;">6 Bedroom Exe...</div><div class="c" style="left:400px;width:35px;text-align:left;letter-spacing:-0.845px;">Mon</div><div class="c" style="left:435px;width:68px;text-align:left;letter-spacing:0.061px;">16/10/2017</div><div class="c" style="left:503px;width:35px;text-align:left;letter-spacing:-0.845px;">Mon</div><div class="c" style="left:538px;width:68px;text-align:left;letter-spacing:0.061px;">30/10/2017</div><div class="c" style="left:606px;width:62px;text-align:left;letter-spacing:-0.040px;">Ocean B...</div><div class="c" style="left:668px;width:25px;text-align:center;">*</div><div class="c" style="left:693px;width:25px;text-align:center;"></div><div class="c" style="left:718px;width:25px;text-align:center;"></div><div class="c" style="left:743px;width:55px;text-align:right;">3,616.67</div><div class="c" style="left:798px;width:55px;text-align:right;">1,808.34</div><div class="c" style="left:853px;width:65px;text-align:right;">3,616.67</div><div class="c" style="left:918px;width:55px;text-align:right;">0.00</div><div class="c" style="left:973px;width:25px;text-align:center;"></div><div class="c" style="left:998px;width:60px;text-align:left;letter-spacing:-1.130px;">XML</div><div class="c" style="left:1058px;width:75px;text-align:left;"></div></div></div>
<div class="t" style="left:222.3px;top:783px;;letter-spacing:0.018px">First portion: 6.0 sec, total search time: 30.8 sec</div>
<div style="left:1560px;top:778px;width:23px;height:22px;background:#d6d3ce;border-left:1px solid #ffffff;border-top:1px solid #ffffff;border-right:1px solid #424142;border-bottom:1px solid #424142;box-shadow:inset -1px -1px 0 #848284;"></div>
<div class="t" style="left:1560px;top:780.3px;width:22px;text-align:center;font-family:&quot;Liberation Serif&quot;,serif;font-weight:bold;font-size:17px;color:#0849ad;line-height:18px;height:18px">i</div>
<div style="left:215px;top:805px;width:1378px;height:1px;background:#848284"></div>
<div style="left:216px;top:806px;width:52px;height:17px;background:#d6d3ce;border-right:1px solid #848284"></div>
<div class="t" style="left:218.5px;top:808px;;letter-spacing:-0.600px">Summary</div>
<div style="left:268px;top:806px;width:40px;height:17px;background:#d6d3ce;border-right:1px solid #848284"></div>
<div class="t" style="left:270.5px;top:808px;;letter-spacing:-0.480px">Search</div>
<div style="left:308px;top:806px;width:126px;height:17px;background:#ceffbd;border-right:1px solid #848284"></div>
<div class="t" style="left:311px;top:808px;;letter-spacing:-0.420px">Flt 1A,1C LON MCO LON</div>
<div style="left:434px;top:806px;width:83px;height:17px;background:#108a00;border-radius:0 0 3px 3px;border:1px solid #087900;border-top:none"></div>
<div class="t" style="left:436.5px;top:808px;color:#ffffff;text-shadow:0 0 0 rgba(255,255,255,.4);letter-spacing:-0.392px">Acc 1A,1C MCO</div>
<div style="left:517px;top:806px;width:51px;height:17px;background:#ceffbd;border-right:1px solid #848284"></div>
<div class="t" style="left:520.5px;top:808px;;letter-spacing:-0.567px">Car MCO</div>
<div style="left:568px;top:806px;width:63px;height:17px;background:#ceffbd;border-right:1px solid #848284"></div>
<div class="t" style="left:571.5px;top:808px;;letter-spacing:-0.056px">Tour 1A,1C</div>
<div style="left:631px;top:806px;width:96px;height:17px;background:#d6d3ce;border-right:1px solid #848284"></div>
<div class="t" style="left:634px;top:808px;;letter-spacing:-0.350px">Financial Summary</div>
<div class="t" style="left:806px;top:832px;;letter-spacing:-0.190px">User: 446 - Clark Silk</div>
<div class="t" style="left:916.5px;top:832px;;letter-spacing:-0.121px">Retailer: 'Ocean-Florida'</div>
<div class="t" style="left:1042.5px;top:832px;;letter-spacing:-0.109px">Client: none</div>
<div class="t" style="left:1540px;top:832px;;letter-spacing:-0.500px">12:43 GMT</div>
<div style="left:0px;top:858px;width:1600px;height:2px;background:#424142"></div></body></html>
